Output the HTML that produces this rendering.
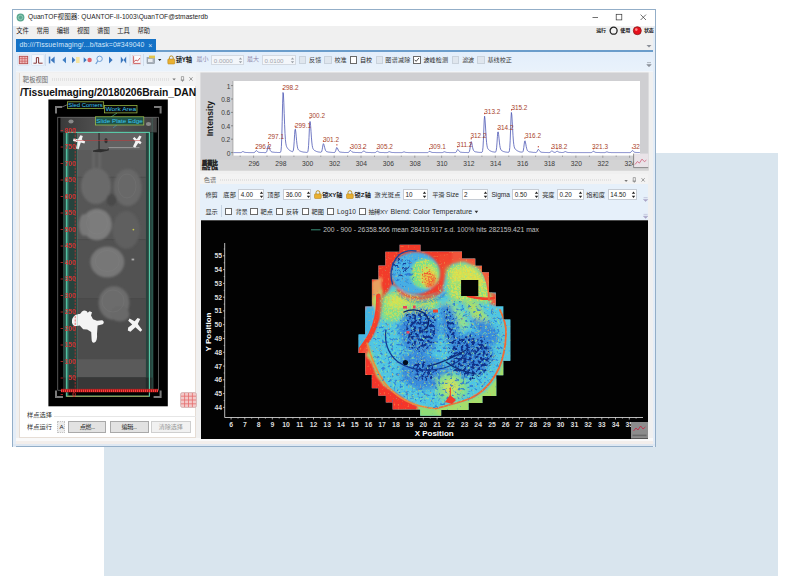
<!DOCTYPE html>
<html lang="zh"><head><meta charset="utf-8"><title>QuanTOF视图器</title>
<style>html,body{margin:0;padding:0;background:#fff;}body{width:788px;height:585px;position:relative;overflow:hidden;font-family:"Liberation Sans","Noto Sans CJK SC",sans-serif;}</style>
</head><body>
<div style="position:absolute;left:104px;top:153px;width:674px;height:423px;background:#d9e5ee;"></div>
<div style="position:absolute;left:12px;top:9px;width:644px;height:438px;background:#f0f0f0;border:1px solid #93aec8;box-sizing:border-box"></div>
<div style="position:absolute;left:13px;top:25.5px;width:3px;height:421px;background:#e4edf7;"></div>
<div style="position:absolute;left:652.6px;top:25.5px;width:2.6px;height:421px;background:#e4edf7;"></div>
<div style="position:absolute;left:13px;top:443.6px;width:642px;height:2.8px;background:#dfe8f2;"></div>
<div style="position:absolute;left:16px;top:437.6px;width:636.5px;height:3.4px;background:#f9f9f9;"></div>
<div style="position:absolute;left:16px;top:441px;width:636.5px;height:2.6px;background:#f3eeeb;"></div>
<div style="position:absolute;left:13px;top:10px;width:642px;height:15.5px;background:#ffffff;"></div>
<svg style="position:absolute;left:16px;top:13px" width="9" height="9" viewBox="0 0 9 9"><circle cx="4.5" cy="4.5" r="3.9" fill="#5aa890"/><circle cx="4.5" cy="4.5" r="2.2" fill="none" stroke="#9fd2c0" stroke-width="0.8"/></svg>
<span style="position:absolute;left:28px;top:13.41px;font-size:6.6px;line-height:8.58px;color:#222;white-space:nowrap;letter-spacing:0.047px;">QuanTOF视图器: QUANTOF-II-1003\QuanTOF@stmasterdb</span>
<svg style="position:absolute;left:585px;top:10px" width="70" height="15" viewBox="0 0 70 15"><g stroke="#333" stroke-width="0.7" fill="none"><path d="M7.5 7.5h5.5"/><rect x="31.2" y="4.3" width="5.6" height="5.6"/><path d="M55.6 4.6l5.4 5.4M61 4.6l-5.4 5.4"/></g></svg>
<span style="position:absolute;left:16.3px;top:26.71px;font-size:6.3px;line-height:8.19px;color:#1a1a1a;white-space:nowrap;letter-spacing:0.003px;">文件</span>
<span style="position:absolute;left:36.5px;top:26.71px;font-size:6.3px;line-height:8.19px;color:#1a1a1a;white-space:nowrap;letter-spacing:0.003px;">常用</span>
<span style="position:absolute;left:56.7px;top:26.71px;font-size:6.3px;line-height:8.19px;color:#1a1a1a;white-space:nowrap;letter-spacing:0.003px;">编辑</span>
<span style="position:absolute;left:76.89999999999999px;top:26.71px;font-size:6.3px;line-height:8.19px;color:#1a1a1a;white-space:nowrap;letter-spacing:0.003px;">视图</span>
<span style="position:absolute;left:97.1px;top:26.71px;font-size:6.3px;line-height:8.19px;color:#1a1a1a;white-space:nowrap;letter-spacing:0.003px;">谱图</span>
<span style="position:absolute;left:117.3px;top:26.71px;font-size:6.3px;line-height:8.19px;color:#1a1a1a;white-space:nowrap;letter-spacing:0.003px;">工具</span>
<span style="position:absolute;left:137.5px;top:26.71px;font-size:6.3px;line-height:8.19px;color:#1a1a1a;white-space:nowrap;letter-spacing:0.003px;">帮助</span>
<span style="position:absolute;left:596.3px;top:27.35px;font-size:5px;line-height:6.5px;color:#111;white-space:nowrap;font-weight:bold;letter-spacing:-0.408px;">运行</span>
<span style="position:absolute;left:620.3px;top:27.35px;font-size:5px;line-height:6.5px;color:#111;white-space:nowrap;font-weight:bold;letter-spacing:-0.158px;">使用</span>
<span style="position:absolute;left:644px;top:27.35px;font-size:5px;line-height:6.5px;color:#111;white-space:nowrap;font-weight:bold;letter-spacing:-0.208px;">状态</span>
<svg style="position:absolute;left:608px;top:25px" width="36" height="12" viewBox="0 0 36 12"><circle cx="5.6" cy="5.7" r="3.5" fill="#f4f4f4" stroke="#222" stroke-width="1.3"/><circle cx="29.3" cy="5.7" r="4" fill="#e8101c" stroke="#8a1a1a" stroke-width="0.8"/><circle cx="28.3" cy="4.6" r="1.3" fill="#ff8a8a"/></svg>
<div style="position:absolute;left:16px;top:39px;width:140px;height:12.6px;background:#1572c6;"></div>
<span style="position:absolute;left:19.5px;top:40.72px;font-size:6.9px;line-height:8.97px;color:#d6e8fa;white-space:nowrap;letter-spacing:0.116px;">db:///TissueImaging/...b/task=0#349040</span>
<span style="position:absolute;left:148.3px;top:40.65px;font-size:7px;line-height:9.1px;color:#d6e8fa;white-space:nowrap;">×</span>
<div style="position:absolute;left:156px;top:50px;width:496.5px;height:1.6px;background:#6b9dcb;"></div>
<svg style="position:absolute;left:645px;top:43px" width="8" height="6" viewBox="0 0 8 6"><path d="M1.5 2l2.5 2.4L6.5 2z" fill="#8a8f98"/></svg>
<div style="position:absolute;left:16px;top:51.6px;width:636.5px;height:19px;background:linear-gradient(#e3eefb,#e9f2fb);"></div>
<div style="position:absolute;left:16px;top:70.6px;width:636.5px;height:1.8px;background:#f1f5fa;"></div>
<svg style="position:absolute;left:16px;top:52px" width="180" height="18" viewBox="16 52 180 18">
<rect x="17.6" y="54.6" width="11.6" height="10.8" rx="1" fill="#f4f8fd" stroke="#c9dcef" stroke-width="0.6"/>
<rect x="19.3" y="56.3" width="8.4" height="7.4" fill="#eebcbc" stroke="#b04a4a" stroke-width="0.9"/>
<path d="M19.3 58.6h8.4M19.3 61.2h8.4M22.1 56.3v7.4M24.9 56.3v7.4" stroke="#c85050" stroke-width="0.6"/>
<rect x="31.6" y="54.6" width="12.6" height="10.8" rx="1" fill="#f4f8fd" stroke="#c9dcef" stroke-width="0.6"/>
<path d="M33.4 63.2h3v-5.6h2.2v5.6h4" fill="none" stroke="#7a2020" stroke-width="0.9"/>
<path d="M45.4 54v12" stroke="#c5d3e2" stroke-width="0.7"/>
<g fill="#3a76bd">
<rect x="48.8" y="56.6" width="1.5" height="6.8"/><path d="M54.6 56.6v6.8l-4-3.4z"/>
<path d="M66 56.8v6.4l-3.6-3.2z" fill="#3f7fc4"/>
<path d="M72 56.8v6.4l3.4-3.2z"/>
<path d="M83.7 57.2v5.6l3-2.8z"/>
<path d="M109 56.6v6.8l3.6-3.4z"/>
<path d="M120.8 56.6l2.7 3.4-2.7 3.4zM126.2 56.6l-2.7 3.4 2.7 3.4z"/>
</g>
<rect x="76" y="57" width="3.6" height="6" fill="#f5e4a0"/>
<circle cx="89.6" cy="60" r="2.2" fill="#e2606a"/>
<circle cx="99.6" cy="58.8" r="2.7" fill="#e8f1fb" stroke="#6f9fd6" stroke-width="1"/><path d="M97.8 61l-2 3" stroke="#6f9fd6" stroke-width="1.3"/>
<path d="M130 54v12M143.5 54v12" stroke="#c5d3e2" stroke-width="0.7"/>
<rect x="132.6" y="55.6" width="8.2" height="8.6" fill="#fbfbfd" stroke="#d9c4c8" stroke-width="0.5"/>
<path d="M133.6 56.2v7.2h6.8M134 61.6l2-1.6 1.6 1 2.4-3" fill="none" stroke="#c23a3a" stroke-width="0.8"/>
<rect x="147" y="57.6" width="7.6" height="6" fill="#a9b1bb" stroke="#7f8790" stroke-width="0.5"/>
<rect x="149" y="55.6" width="6" height="2.6" fill="#e3c54a"/>
<rect x="148" y="59" width="4.6" height="3" fill="#e9edf2"/>
<path d="M158 59l1.7 2 1.7-2z" fill="#222"/>
<path d="M169.4 59.2v-1.4a1.9 1.9 0 0 1 3.8 0v1.4" fill="none" stroke="#b8860b" stroke-width="0.9"/>
<rect x="167.8" y="59" width="7" height="5" rx="0.8" fill="#e9b030" stroke="#b07d10" stroke-width="0.5"/>
</svg>
<span style="position:absolute;left:175.7px;top:55.91px;font-size:6.3px;line-height:8.19px;color:#1e1e1e;white-space:nowrap;font-weight:bold;letter-spacing:-0.266px;">锁Y轴</span>
<span style="position:absolute;left:196.6px;top:56.1px;font-size:6.0px;line-height:7.8px;color:#8d86a8;white-space:nowrap;letter-spacing:-0.208px;">最小</span>
<div style="position:absolute;left:211.4px;top:54.8px;width:32.3px;height:10.6px;background:#f3f6fa;border:0.6px solid #d3d9e1;box-sizing:border-box;"></div>
<span style="position:absolute;left:213.8px;top:56.97px;font-size:6.2px;line-height:8.06px;color:#a3a7ae;white-space:nowrap;">0.0000</span>
<svg style="position:absolute;left:238.1px;top:55.8px" width="5" height="8.6" viewBox="0 0 5 10" preserveAspectRatio="none"><path d="M0.8 4L2.5 1.6 4.2 4zM0.8 6L2.5 8.4 4.2 6z" fill="#9aa0a8"/></svg>
<span style="position:absolute;left:247px;top:56.1px;font-size:6.0px;line-height:7.8px;color:#8d86a8;white-space:nowrap;letter-spacing:-0.058px;">最大</span>
<div style="position:absolute;left:262.2px;top:54.8px;width:33.5px;height:10.6px;background:#f3f6fa;border:0.6px solid #d3d9e1;box-sizing:border-box;"></div>
<span style="position:absolute;left:264.59999999999997px;top:56.97px;font-size:6.2px;line-height:8.06px;color:#a3a7ae;white-space:nowrap;">0.0100</span>
<svg style="position:absolute;left:290.09999999999997px;top:55.8px" width="5" height="8.6" viewBox="0 0 5 10" preserveAspectRatio="none"><path d="M0.8 4L2.5 1.6 4.2 4zM0.8 6L2.5 8.4 4.2 6z" fill="#9aa0a8"/></svg>
<div style="position:absolute;left:299px;top:56.3px;width:7.4px;height:7.4px;background:#dfe6ee;border:0.6px solid #c9d2dc;box-sizing:border-box;"></div>
<span style="position:absolute;left:309px;top:56.03px;font-size:6.1px;line-height:7.93px;color:#3a3a3a;white-space:nowrap;letter-spacing:0.056px;">反馈</span>
<div style="position:absolute;left:324.4px;top:56.3px;width:7.4px;height:7.4px;background:#dfe6ee;border:0.6px solid #c9d2dc;box-sizing:border-box;"></div>
<span style="position:absolute;left:334.5px;top:56.03px;font-size:6.1px;line-height:7.93px;color:#3a3a3a;white-space:nowrap;letter-spacing:0.006px;">校准</span>
<div style="position:absolute;left:349.7px;top:56.3px;width:7.4px;height:7.4px;background:#ffffff;border:0.6px solid #6a6a6a;box-sizing:border-box;"></div>
<span style="position:absolute;left:359.9px;top:56.03px;font-size:6.1px;line-height:7.93px;color:#222;white-space:nowrap;letter-spacing:-0.044px;">自校</span>
<div style="position:absolute;left:375.6px;top:56.3px;width:7.4px;height:7.4px;background:#dfe6ee;border:0.6px solid #c9d2dc;box-sizing:border-box;"></div>
<span style="position:absolute;left:385.3px;top:56.03px;font-size:6.1px;line-height:7.93px;color:#3a3a3a;white-space:nowrap;letter-spacing:0.256px;">图谱减除</span>
<div style="position:absolute;left:413.2px;top:56.3px;width:7.4px;height:7.4px;background:#ffffff;border:0.6px solid #6a6a6a;box-sizing:border-box;"></div>
<svg style="position:absolute;left:413.2px;top:56.3px" width="7.4" height="7.4" viewBox="0 0 8 8"><path d="M1.8 4.1l1.6 1.7 3-3.6" fill="none" stroke="#222" stroke-width="0.9"/></svg>
<span style="position:absolute;left:423.4px;top:56.03px;font-size:6.1px;line-height:7.93px;color:#222;white-space:nowrap;letter-spacing:0.106px;">波峰检测</span>
<div style="position:absolute;left:452px;top:56.3px;width:7.4px;height:7.4px;background:#dfe6ee;border:0.6px solid #c9d2dc;box-sizing:border-box;"></div>
<span style="position:absolute;left:462.2px;top:56.03px;font-size:6.1px;line-height:7.93px;color:#3a3a3a;white-space:nowrap;letter-spacing:-0.194px;">滤波</span>
<div style="position:absolute;left:477.4px;top:56.3px;width:7.4px;height:7.4px;background:#dfe6ee;border:0.6px solid #c9d2dc;box-sizing:border-box;"></div>
<span style="position:absolute;left:487.6px;top:56.03px;font-size:6.1px;line-height:7.93px;color:#3a3a3a;white-space:nowrap;letter-spacing:-0.069px;">基线校正</span>
<svg style="position:absolute;left:645px;top:61px" width="8" height="8" viewBox="0 0 8 8"><path d="M2 1.6h4M1.8 3.6l2.2 2.2 2.2-2.2z" stroke="#8a8f98" stroke-width="0.6" fill="#8a8f98"/></svg>
<div style="position:absolute;left:19px;top:72.5px;width:177.4px;height:365px;background:#ffffff;border:0.7px solid #e6ddd5;box-sizing:border-box;"></div>
<div style="position:absolute;left:19.7px;top:73.2px;width:176px;height:12.6px;background:#f3f3f3;"></div>
<span style="position:absolute;left:22.8px;top:75.5px;font-size:6.3px;line-height:8.19px;color:#6a6a6a;white-space:nowrap;letter-spacing:0.053px;">靶板视图</span>
<div style="position:absolute;left:52px;top:78.4px;width:118px;height:2.4px;background:repeating-linear-gradient(90deg,#e2e2e2 0 1px,#f3f3f3 1px 2px);"></div>
<svg style="position:absolute;left:170px;top:75px" width="26" height="9" viewBox="170 75 26 9"><path d="M172.4 78.6h3.4l-1.7 1.9z" fill="#777"/><path d="M181.4 76.6h2.2v3.6h-2.2zM182.5 80.2v1.6M180.8 80.2h3.4" fill="none" stroke="#777" stroke-width="0.6"/><path d="M189.4 77.2l3.2 3.4M192.6 77.2l-3.2 3.4" stroke="#777" stroke-width="0.7"/></svg>
<span style="position:absolute;left:19.9px;top:85.5px;font-size:10.3px;line-height:13.39px;color:#111;white-space:nowrap;font-weight:bold;letter-spacing:-0.050px;">/TissueImaging/20180206Brain_DAN</span>
<svg style="position:absolute;left:48px;top:99px" width="121" height="308" viewBox="48 99 121 308" font-family="'Liberation Sans',sans-serif"><defs><filter id="b1" x="-20%" y="-20%" width="140%" height="140%"><feGaussianBlur stdDeviation="0.9"/></filter><filter id="b2" x="-20%" y="-20%" width="140%" height="140%"><feGaussianBlur stdDeviation="1.8"/></filter><filter id="b05"><feGaussianBlur stdDeviation="0.45"/></filter><linearGradient id="sg" x1="0" y1="0" x2="0" y2="1"><stop offset="0" stop-color="#5e5e5e"/><stop offset="0.35" stop-color="#595959"/><stop offset="0.7" stop-color="#505050"/><stop offset="1" stop-color="#464646"/></linearGradient><linearGradient id="tg" x1="0" y1="0" x2="1" y2="0"><stop offset="0" stop-color="#3a3a3a"/><stop offset="0.5" stop-color="#565656"/><stop offset="1" stop-color="#404040"/></linearGradient></defs><rect x="48.4" y="99.5" width="119.4" height="306.8" fill="#000"/><rect x="60.400" y="117.400" width="96.400" height="15" fill="url(#tg)"/><rect x="63" y="132.400" width="90.400" height="256.400" fill="#27433d"/><rect x="77.200" y="132.400" width="68.600" height="256.400" fill="url(#sg)"/><rect x="140.400" y="150" width="5.400" height="238" fill="#474747" opacity="0.700"/><g filter="url(#b05)"><ellipse cx="71" cy="121.500" rx="2.600" ry="2" fill="#8a8a8a"/><ellipse cx="148.500" cy="124" rx="2.600" ry="2" fill="#8a8a8a"/></g><rect x="77.200" y="132.400" width="68.600" height="17.600" fill="#626262"/><rect x="77.200" y="150" width="68.600" height="27.200" fill="#5b5b5b"/><rect x="77.200" y="177.200" width="68.600" height="62.400" fill="#565656"/><rect x="77.200" y="239.600" width="68.600" height="59" fill="#525252"/><rect x="77.200" y="298.600" width="68.600" height="60.600" fill="#4c4c4c"/><rect x="77.200" y="359.200" width="68.600" height="18.400" fill="#5a5a5a"/><rect x="63" y="377.600" width="90.400" height="11.200" fill="#232c2a"/><rect x="77.200" y="377.600" width="68.600" height="11.200" fill="#383838"/><path d="M77.200 177.200h68.600M77.200 239.600h68.600M77.200 298.600h68.600" stroke="#474747" stroke-width="0.500"/><g filter="url(#b1)"><ellipse cx="96" cy="186" rx="15" ry="18" fill="#6a6a6a"/><ellipse cx="127.600" cy="187.500" rx="14" ry="18.600" fill="#686868"/><path d="M92.600 150h1.800v18h-1.800zM98.800 150h1.800v18h-1.800z" fill="#6c6c6c"/><ellipse cx="111.500" cy="200" rx="5" ry="6" fill="#484848"/><ellipse cx="97" cy="224.500" rx="14.800" ry="15.800" fill="#7c7c7c"/><ellipse cx="84" cy="225" rx="5" ry="11" fill="#787878"/><ellipse cx="126.200" cy="230" rx="13.600" ry="19" fill="#5e5e5e"/><ellipse cx="107.300" cy="262" rx="17" ry="15.600" fill="#777"/><ellipse cx="114" cy="303" rx="15.400" ry="16.800" fill="#6c6c6c"/><ellipse cx="120" cy="314" rx="9.500" ry="7.500" fill="#696969"/></g><g filter="url(#b05)" fill="none" stroke="#8c8c8c" stroke-width="0.600" opacity="0.300"><ellipse cx="97" cy="223" rx="10.500" ry="11"/><ellipse cx="107.300" cy="261" rx="12" ry="10.500"/><ellipse cx="113" cy="301" rx="11" ry="11"/><ellipse cx="127" cy="186" rx="9" ry="12"/></g><g filter="url(#b05)"><path d="M98.400 133h1.300v16h-1.300z" fill="#303030"/><path d="M93 150.600l6-1.600 8 .6 2-1.600-.4 2.600-8 1.600-7.600-.4z" fill="#2e2e2e"/><ellipse cx="106" cy="140.600" rx="1.700" ry="2.600" fill="#333"/><path d="M108.500 147.600h31" stroke="#b0b0b0" stroke-width="0.700"/></g><g filter="url(#b05)" fill="#f4f4f4"><path d="M80.400 135.200l2.400.800-1 3.600 3.400 1.800-.8 2.200-3.600-1-2.200 6.600-2.600-.600 1.400-6.400-4.400-1.200.6-2.400 4.400.600z"/><path d="M139.400 135.400l2.200 1-2 4.200 2 2-1.400 1.600-2-1.200-3 4.800-2.200-1.200 2.400-5-2.600-3 1.600-1.600 2.400 2.200z"/><path d="M72 320c1-4 4-6 8-6l2-2.600c2-1.400 5-1 5.600 1.400l2-1.600 2.400 1-1 3.400 2 3.600 4 1.600 5-.6c2 .4 2.400 3 .6 4l-5 1.400-.6 8.400c.4 4.600-.4 7.400-2.400 8.600-2 .6-3-1-3-3.600l-.4-7-4-2.400-4-.4-3.400-3.600-4.600.6c-2.400-.6-3.600-3-3.200-5.800z"/><path d="M137.600 318l2.600 1-2.400 5 4.400 6-1.800 1.800-5-4.600-5 4.600-2.600-1.200.4-3 4-3.200-4-3.600 1.400-2.200 5 2.600z"/></g><circle cx="133.400" cy="229.600" r="0.900" fill="#c8c84a"/><rect x="131.600" y="258.600" width="2.600" height="1.800" fill="#aaa" filter="url(#b05)"/><rect x="57.8" y="117.2" width="100.6" height="273" fill="none" stroke="#8d8d8d" stroke-width="0.6"/><path d="M76 140.500h64" stroke="#c83434" stroke-width="0.500"/><rect x="66.400" y="132.400" width="83" height="263.800" fill="none" stroke="#5acdaa" stroke-width="1.100"/><path d="M67.600 133v263" stroke="#3f9f86" stroke-width="1.600" opacity="0.700"/><path d="M77.300 133v256M152.200 118v272" stroke="#3f9f86" stroke-width="0.500" opacity="0.600"/><path d="M66.7 396.300h82" stroke="#b9a04a" stroke-width="0.8"/><g fill="none" stroke="#7a7a7a" stroke-width="2"><path d="M56 113.600v-6.600h6"/><path d="M154 107h6.600v6.600"/><path d="M56 390.400v6.600h7"/><path d="M153.600 397h7v-6.600"/></g><path d="M75.200 128v264" stroke="#e03030" stroke-width="0.7" stroke-dasharray="2.2 1.1"/><path d="M60.600 130.5h2.400" stroke="#e03030" stroke-width="0.7"/><text x="76" y="132.9" font-size="6.800" font-weight="bold" fill="#e23434" opacity="0.900" text-anchor="end">800</text><path d="M60.600 147.0h2.400" stroke="#e03030" stroke-width="0.7"/><text x="76" y="149.4" font-size="6.800" font-weight="bold" fill="#e23434" opacity="0.900" text-anchor="end">750</text><path d="M60.600 163.5h2.400" stroke="#e03030" stroke-width="0.7"/><text x="76" y="165.9" font-size="6.800" font-weight="bold" fill="#e23434" opacity="0.900" text-anchor="end">700</text><path d="M60.600 180.0h2.400" stroke="#e03030" stroke-width="0.7"/><text x="76" y="182.4" font-size="6.800" font-weight="bold" fill="#e23434" opacity="0.900" text-anchor="end">650</text><path d="M60.600 196.5h2.400" stroke="#e03030" stroke-width="0.7"/><text x="76" y="198.9" font-size="6.800" font-weight="bold" fill="#e23434" opacity="0.900" text-anchor="end">600</text><path d="M60.600 213.0h2.400" stroke="#e03030" stroke-width="0.7"/><text x="76" y="215.4" font-size="6.800" font-weight="bold" fill="#e23434" opacity="0.900" text-anchor="end">550</text><path d="M60.600 229.5h2.400" stroke="#e03030" stroke-width="0.7"/><text x="76" y="231.9" font-size="6.800" font-weight="bold" fill="#e23434" opacity="0.900" text-anchor="end">500</text><path d="M60.600 246.0h2.400" stroke="#e03030" stroke-width="0.7"/><text x="76" y="248.4" font-size="6.800" font-weight="bold" fill="#e23434" opacity="0.900" text-anchor="end">450</text><path d="M60.600 262.5h2.400" stroke="#e03030" stroke-width="0.7"/><text x="76" y="264.9" font-size="6.800" font-weight="bold" fill="#e23434" opacity="0.900" text-anchor="end">400</text><path d="M60.600 279.0h2.400" stroke="#e03030" stroke-width="0.7"/><text x="76" y="281.4" font-size="6.800" font-weight="bold" fill="#e23434" opacity="0.900" text-anchor="end">350</text><path d="M60.600 295.5h2.400" stroke="#e03030" stroke-width="0.7"/><text x="76" y="297.9" font-size="6.800" font-weight="bold" fill="#e23434" opacity="0.900" text-anchor="end">300</text><path d="M60.600 312.0h2.400" stroke="#e03030" stroke-width="0.7"/><text x="76" y="314.4" font-size="6.800" font-weight="bold" fill="#e23434" opacity="0.900" text-anchor="end">250</text><path d="M60.600 328.5h2.400" stroke="#e03030" stroke-width="0.7"/><text x="76" y="330.9" font-size="6.800" font-weight="bold" fill="#e23434" opacity="0.900" text-anchor="end">200</text><path d="M60.600 345.0h2.400" stroke="#e03030" stroke-width="0.7"/><text x="76" y="347.4" font-size="6.800" font-weight="bold" fill="#e23434" opacity="0.900" text-anchor="end">150</text><path d="M60.600 361.5h2.400" stroke="#e03030" stroke-width="0.7"/><text x="76" y="363.9" font-size="6.800" font-weight="bold" fill="#e23434" opacity="0.900" text-anchor="end">100</text><path d="M60.600 378.0h2.400" stroke="#e03030" stroke-width="0.7"/><text x="76" y="380.4" font-size="6.800" font-weight="bold" fill="#e23434" opacity="0.900" text-anchor="end">50</text><path d="M60.600 394.5h2.400" stroke="#e03030" stroke-width="0.7"/><text x="76" y="396.9" font-size="6.800" font-weight="bold" fill="#e23434" opacity="0.900" text-anchor="end">0</text><rect x="61" y="389.200" width="97" height="3.200" fill="#7a1010"/><path d="M61 390.800h97" stroke="#ff3b3b" stroke-width="2.600" stroke-dasharray="1.300 0.700"/><path d="M61 389.300h97" stroke="#e03030" stroke-width="0.600"/><path d="M62 107l5.600-2.400" stroke="#9a9a9a" stroke-width="0.700"/><path d="M117 113l-6 4" stroke="#58c9a6" stroke-width="0.600"/><path d="M118 124l-5 4" stroke="#3aa0c0" stroke-width="0.600"/><rect x="67.4" y="101.8" width="36.3" height="6.8" fill="#0a0a0a" stroke="#a8c84a" stroke-width="0.700"/><text x="68.30000000000001" y="106.89999999999999" font-size="6" fill="#39c5f0" textLength="34.4" lengthAdjust="spacingAndGlyphs">Sled Corners</text><rect x="104.6" y="105.5" width="32.4" height="7.4" fill="#0a0a0a" stroke="#a8c84a" stroke-width="0.700"/><text x="105.5" y="111.2" font-size="6" fill="#39c5f0" textLength="30.6" lengthAdjust="spacingAndGlyphs">Work Area</text><rect x="95.4" y="116.8" width="48.4" height="8.2" fill="#1f5348" stroke="#a8c84a" stroke-width="0.700"/><text x="96.30000000000001" y="123.3" font-size="6" fill="#39c5f0" textLength="46.4" lengthAdjust="spacingAndGlyphs">Slide Plate Edge</text></svg>
<svg style="position:absolute;left:180px;top:391.5px" width="17" height="16" viewBox="0 0 17 16"><rect x="0.6" y="0.6" width="15.8" height="14.8" rx="1.6" fill="#f3c9c9" stroke="#c9a3a3" stroke-width="0.7"/><path d="M1 4.2h15M1 8h15M1 11.8h15M4.6 1v14M8.5 1v14M12.4 1v14" stroke="#e46c6c" stroke-width="0.8"/></svg>
<span style="position:absolute;left:27px;top:411.47px;font-size:6.2px;line-height:8.06px;color:#333;white-space:nowrap;letter-spacing:0.062px;">样点选择</span>
<div style="position:absolute;left:53.5px;top:415.6px;width:142px;height:0.5px;background:#e6e6e6;"></div>
<span style="position:absolute;left:27px;top:422.97px;font-size:6.2px;line-height:8.06px;color:#333;white-space:nowrap;letter-spacing:0.062px;">样点运行</span>
<div style="position:absolute;left:57.4px;top:420.6px;width:7.6px;height:12.6px;background:#ececec;border:0.6px dotted #c4c4c4;box-sizing:border-box;"></div>
<span style="position:absolute;left:59.6px;top:422.97px;font-size:6.2px;line-height:8.06px;color:#222;white-space:nowrap;">A</span>
<div style="position:absolute;left:68px;top:421.3px;width:38.4px;height:11.4px;background:#e2e2e2;border:0.7px solid #a9a9a9;box-sizing:border-box;"></div>
<span style="position:absolute;left:79.7px;top:423.04px;font-size:6.1px;line-height:7.93px;color:#222;white-space:nowrap;letter-spacing:-0.456px;">点燃...</span>
<div style="position:absolute;left:109.5px;top:421.3px;width:39px;height:11.4px;background:#e2e2e2;border:0.7px solid #a9a9a9;box-sizing:border-box;"></div>
<span style="position:absolute;left:121.5px;top:423.04px;font-size:6.1px;line-height:7.93px;color:#222;white-space:nowrap;letter-spacing:-0.456px;">编辑...</span>
<div style="position:absolute;left:151px;top:421.3px;width:39.7px;height:11.4px;background:#f1f1f1;border:0.7px solid #cfcfcf;box-sizing:border-box;"></div>
<span style="position:absolute;left:158.85px;top:423.04px;font-size:6.1px;line-height:7.93px;color:#9a9a9a;white-space:nowrap;letter-spacing:-0.094px;">清除选择</span>
<svg style="position:absolute;left:200px;top:72px" width="449" height="99" viewBox="200 72 449 99" font-family="'Liberation Sans','Noto Sans CJK SC',sans-serif"><rect x="200.4" y="72.5" width="448.2" height="98" fill="#cfcfd2"/><rect x="200.4" y="159.700" width="448.2" height="10.800" fill="#d3d3d4"/><rect x="233" y="81" width="407" height="74.600" fill="#ffffff"/><clipPath id="pc"><rect x="233" y="81" width="407" height="74.600"/></clipPath><path d="M231 152.6h2" stroke="#555" stroke-width="0.6"/><text x="230.300" y="155.6" font-size="6.600" fill="#3a3a3a" text-anchor="end">0</text><path d="M231 139.2h2" stroke="#555" stroke-width="0.6"/><text x="230.300" y="142.2" font-size="6.600" fill="#3a3a3a" text-anchor="end">0.2</text><path d="M231 125.8h2" stroke="#555" stroke-width="0.6"/><text x="230.300" y="128.8" font-size="6.600" fill="#3a3a3a" text-anchor="end">0.4</text><path d="M231 112.4h2" stroke="#555" stroke-width="0.6"/><text x="230.300" y="115.4" font-size="6.600" fill="#3a3a3a" text-anchor="end">0.6</text><path d="M231 99.0h2" stroke="#555" stroke-width="0.6"/><text x="230.300" y="102.0" font-size="6.600" fill="#3a3a3a" text-anchor="end">0.8</text><path d="M231 85.6h2" stroke="#555" stroke-width="0.6"/><text x="230.300" y="88.6" font-size="6.600" fill="#3a3a3a" text-anchor="end">1</text><path d="M233 81v74.600" stroke="#777" stroke-width="0.5"/><path d="M240.2 155.600v1.3" stroke="#666" stroke-width="0.5"/><path d="M253.6 155.600v2.2" stroke="#666" stroke-width="0.5"/><text x="254.0" y="165.800" font-size="6.700" fill="#3a3a3a" text-anchor="middle">296</text><path d="M267.0 155.600v1.3" stroke="#666" stroke-width="0.5"/><path d="M280.5 155.600v2.2" stroke="#666" stroke-width="0.5"/><text x="280.9" y="165.800" font-size="6.700" fill="#3a3a3a" text-anchor="middle">298</text><path d="M293.9 155.600v1.3" stroke="#666" stroke-width="0.5"/><path d="M307.3 155.600v2.2" stroke="#666" stroke-width="0.5"/><text x="307.7" y="165.800" font-size="6.700" fill="#3a3a3a" text-anchor="middle">300</text><path d="M320.8 155.600v1.3" stroke="#666" stroke-width="0.5"/><path d="M334.2 155.600v2.2" stroke="#666" stroke-width="0.5"/><text x="334.6" y="165.800" font-size="6.700" fill="#3a3a3a" text-anchor="middle">302</text><path d="M347.6 155.600v1.3" stroke="#666" stroke-width="0.5"/><path d="M361.0 155.600v2.2" stroke="#666" stroke-width="0.5"/><text x="361.4" y="165.800" font-size="6.700" fill="#3a3a3a" text-anchor="middle">304</text><path d="M374.5 155.600v1.3" stroke="#666" stroke-width="0.5"/><path d="M387.9 155.600v2.2" stroke="#666" stroke-width="0.5"/><text x="388.3" y="165.800" font-size="6.700" fill="#3a3a3a" text-anchor="middle">306</text><path d="M401.3 155.600v1.3" stroke="#666" stroke-width="0.5"/><path d="M414.8 155.600v2.2" stroke="#666" stroke-width="0.5"/><text x="415.2" y="165.800" font-size="6.700" fill="#3a3a3a" text-anchor="middle">308</text><path d="M428.2 155.600v1.3" stroke="#666" stroke-width="0.5"/><path d="M441.6 155.600v2.2" stroke="#666" stroke-width="0.5"/><text x="442.0" y="165.800" font-size="6.700" fill="#3a3a3a" text-anchor="middle">310</text><path d="M455.0 155.600v1.3" stroke="#666" stroke-width="0.5"/><path d="M468.5 155.600v2.2" stroke="#666" stroke-width="0.5"/><text x="468.9" y="165.800" font-size="6.700" fill="#3a3a3a" text-anchor="middle">312</text><path d="M481.9 155.600v1.3" stroke="#666" stroke-width="0.5"/><path d="M495.3 155.600v2.2" stroke="#666" stroke-width="0.5"/><text x="495.7" y="165.800" font-size="6.700" fill="#3a3a3a" text-anchor="middle">314</text><path d="M508.8 155.600v1.3" stroke="#666" stroke-width="0.5"/><path d="M522.2 155.600v2.2" stroke="#666" stroke-width="0.5"/><text x="522.6" y="165.800" font-size="6.700" fill="#3a3a3a" text-anchor="middle">316</text><path d="M535.6 155.600v1.3" stroke="#666" stroke-width="0.5"/><path d="M549.1 155.600v2.2" stroke="#666" stroke-width="0.5"/><text x="549.5" y="165.800" font-size="6.700" fill="#3a3a3a" text-anchor="middle">318</text><path d="M562.5 155.600v1.3" stroke="#666" stroke-width="0.5"/><path d="M575.9 155.600v2.2" stroke="#666" stroke-width="0.5"/><text x="576.3" y="165.800" font-size="6.700" fill="#3a3a3a" text-anchor="middle">320</text><path d="M589.4 155.600v1.3" stroke="#666" stroke-width="0.5"/><path d="M602.8 155.600v2.2" stroke="#666" stroke-width="0.5"/><text x="603.2" y="165.800" font-size="6.700" fill="#3a3a3a" text-anchor="middle">322</text><path d="M616.2 155.600v1.3" stroke="#666" stroke-width="0.5"/><path d="M629.6 155.600v2.2" stroke="#666" stroke-width="0.5"/><text x="630.0" y="165.800" font-size="6.700" fill="#3a3a3a" text-anchor="middle">324</text><g clip-path="url(#pc)"><path d="M233.4 152.6 L233.8 152.6 L234.2 152.6 L234.6 152.6 L235.0 152.6 L235.4 152.6 L235.8 152.6 L236.2 152.6 L236.6 152.6 L237.0 152.6 L237.4 152.6 L237.8 152.6 L238.2 152.6 L238.6 152.6 L239.0 152.6 L239.4 152.6 L239.8 152.6 L240.2 152.6 L240.6 152.6 L241.0 152.5 L241.4 152.4 L241.8 152.2 L242.2 151.9 L242.6 151.6 L243.0 151.6 L243.4 151.7 L243.8 151.9 L244.2 152.1 L244.6 152.3 L245.0 152.4 L245.4 152.4 L245.8 152.5 L246.2 152.5 L246.6 152.5 L247.0 152.5 L247.4 152.5 L247.8 152.5 L248.2 152.5 L248.6 152.6 L249.0 152.6 L249.4 152.6 L249.8 152.6 L250.2 152.6 L250.6 152.6 L251.0 152.6 L251.4 152.6 L251.8 152.6 L252.2 152.6 L252.6 152.6 L253.0 152.6 L253.4 152.6 L253.8 152.6 L254.2 152.5 L254.6 152.4 L255.0 152.0 L255.4 151.5 L255.8 150.9 L256.2 150.6 L256.6 150.7 L257.0 151.0 L257.4 151.4 L257.8 151.7 L258.2 152.0 L258.6 152.2 L259.0 152.3 L259.4 152.4 L259.8 152.4 L260.2 152.4 L260.6 152.5 L261.0 152.5 L261.4 152.5 L261.8 152.5 L262.2 152.5 L262.6 152.5 L263.0 152.5 L263.4 152.5 L263.8 152.5 L264.2 152.6 L264.6 152.6 L265.0 152.6 L265.4 152.6 L265.8 152.5 L266.2 152.4 L266.6 151.9 L267.0 150.8 L267.4 149.1 L267.8 147.0 L268.2 145.5 L268.6 145.6 L269.0 146.6 L269.4 147.9 L269.8 149.2 L270.2 150.3 L270.6 151.0 L271.0 151.5 L271.4 151.7 L271.8 151.9 L272.2 152.0 L272.6 152.1 L273.0 152.1 L273.4 152.2 L273.8 152.2 L274.2 152.3 L274.6 152.3 L275.0 152.3 L275.4 152.4 L275.8 152.4 L276.2 152.4 L276.6 152.4 L277.0 152.5 L277.4 152.5 L277.8 152.5 L278.2 152.5 L278.6 152.5 L279.0 152.5 L279.4 152.5 L279.8 152.5 L280.2 152.5 L280.6 152.1 L281.0 150.7 L281.4 146.5 L281.8 137.0 L282.2 121.5 L282.6 103.8 L283.0 92.5 L283.4 94.0 L283.8 102.3 L284.2 113.4 L284.6 124.5 L285.0 133.5 L285.4 139.5 L285.8 143.2 L286.2 145.3 L286.6 146.6 L287.0 147.4 L287.4 148.1 L287.8 148.6 L288.2 149.1 L288.6 149.5 L289.0 149.9 L289.4 150.2 L289.8 150.5 L290.2 150.7 L290.6 150.9 L291.0 151.1 L291.4 151.3 L291.8 151.5 L292.2 151.6 L292.6 151.6 L293.0 151.3 L293.4 150.0 L293.8 147.0 L294.2 141.5 L294.6 134.7 L295.0 129.5 L295.4 129.2 L295.8 132.0 L296.2 136.2 L296.6 140.6 L297.0 144.3 L297.4 146.9 L297.8 148.6 L298.2 149.5 L298.6 150.0 L299.0 150.4 L299.4 150.7 L299.8 150.9 L300.2 151.1 L300.6 151.3 L301.0 151.4 L301.4 151.6 L301.8 151.7 L302.2 151.8 L302.6 151.9 L303.0 152.0 L303.4 152.1 L303.8 152.1 L304.2 152.2 L304.6 152.2 L305.0 152.3 L305.4 152.3 L305.8 152.3 L306.2 152.4 L306.6 152.4 L307.0 152.4 L307.4 152.3 L307.8 151.7 L308.2 149.8 L308.6 145.4 L309.0 137.7 L309.4 128.4 L309.8 121.7 L310.2 121.6 L310.6 125.6 L311.0 131.3 L311.4 137.1 L311.8 142.0 L312.2 145.4 L312.6 147.5 L313.0 148.7 L313.4 149.4 L313.8 149.8 L314.2 150.2 L314.6 150.5 L315.0 150.7 L315.4 150.9 L315.8 151.1 L316.2 151.3 L316.6 151.5 L317.0 151.6 L317.4 151.7 L317.8 151.8 L318.2 151.9 L318.6 152.0 L319.0 152.1 L319.4 152.1 L319.8 152.2 L320.2 152.2 L320.6 152.3 L321.0 152.2 L321.4 152.0 L321.8 151.2 L322.2 149.6 L322.6 147.2 L323.0 144.8 L323.4 143.7 L323.8 144.3 L324.2 145.7 L324.6 147.3 L325.0 148.9 L325.4 150.1 L325.8 150.8 L326.2 151.3 L326.6 151.6 L327.0 151.7 L327.4 151.8 L327.8 151.9 L328.2 152.0 L328.6 152.1 L329.0 152.1 L329.4 152.2 L329.8 152.2 L330.2 152.3 L330.6 152.3 L331.0 152.4 L331.4 152.4 L331.8 152.4 L332.2 152.4 L332.6 152.5 L333.0 152.5 L333.4 152.5 L333.8 152.5 L334.2 152.5 L334.6 152.4 L335.0 152.2 L335.4 151.5 L335.8 150.4 L336.2 148.9 L336.6 147.7 L337.0 147.6 L337.4 148.1 L337.8 149.0 L338.2 150.0 L338.6 150.8 L339.0 151.4 L339.4 151.7 L339.8 151.9 L340.2 152.1 L340.6 152.1 L341.0 152.2 L341.4 152.2 L341.8 152.3 L342.2 152.3 L342.6 152.4 L343.0 152.4 L343.4 152.4 L343.8 152.4 L344.2 152.5 L344.6 152.5 L345.0 152.5 L345.4 152.5 L345.8 152.5 L346.2 152.5 L346.6 152.5 L347.0 152.5 L347.4 152.5 L347.8 152.5 L348.2 152.5 L348.6 152.3 L349.0 151.9 L349.4 151.4 L349.8 150.7 L350.2 150.4 L350.6 150.5 L351.0 150.8 L351.4 151.2 L351.8 151.6 L352.2 151.9 L352.6 152.1 L353.0 152.3 L353.4 152.3 L353.8 152.4 L354.2 152.4 L354.6 152.4 L355.0 152.5 L355.4 152.5 L355.8 152.5 L356.2 152.5 L356.6 152.5 L357.0 152.5 L357.4 152.5 L357.8 152.5 L358.2 152.5 L358.6 152.6 L359.0 152.6 L359.4 152.6 L359.8 152.6 L360.2 152.6 L360.6 152.6 L361.0 152.6 L361.4 152.6 L361.8 152.5 L362.2 152.3 L362.6 151.9 L363.0 151.4 L363.4 151.0 L363.8 150.9 L364.2 151.1 L364.6 151.4 L365.0 151.7 L365.4 152.0 L365.8 152.2 L366.2 152.3 L366.6 152.4 L367.0 152.4 L367.4 152.4 L367.8 152.5 L368.2 152.5 L368.6 152.5 L369.0 152.5 L369.4 152.5 L369.8 152.5 L370.2 152.5 L370.6 152.5 L371.0 152.5 L371.4 152.6 L371.8 152.6 L372.2 152.6 L372.6 152.6 L373.0 152.6 L373.4 152.6 L373.8 152.6 L374.2 152.6 L374.6 152.6 L375.0 152.5 L375.4 152.5 L375.8 152.2 L376.2 151.9 L376.6 151.5 L377.0 151.2 L377.4 151.2 L377.8 151.4 L378.2 151.7 L378.6 151.9 L379.0 152.2 L379.4 152.3 L379.8 152.4 L380.2 152.4 L380.6 152.5 L381.0 152.5 L381.4 152.5 L381.8 152.5 L382.2 152.5 L382.6 152.5 L383.0 152.5 L383.4 152.5 L383.8 152.5 L384.2 152.6 L384.6 152.6 L385.0 152.6 L385.4 152.6 L385.8 152.6 L386.2 152.6 L386.6 152.6 L387.0 152.6 L387.4 152.5 L387.8 152.4 L388.2 152.2 L388.6 151.9 L389.0 151.7 L389.4 151.7 L389.8 151.8 L390.2 152.0 L390.6 152.1 L391.0 152.3 L391.4 152.4 L391.8 152.4 L392.2 152.5 L392.6 152.5 L393.0 152.5 L393.4 152.5 L393.8 152.5 L394.2 152.5 L394.6 152.6 L395.0 152.6 L395.4 152.6 L395.8 152.6 L396.2 152.6 L396.6 152.6 L397.0 152.6 L397.4 152.6 L397.8 152.6 L398.2 152.6 L398.6 152.6 L399.0 152.6 L399.4 152.6 L399.8 152.6 L400.2 152.6 L400.6 152.6 L401.0 152.6 L401.4 152.6 L401.8 152.6 L402.2 152.5 L402.6 152.4 L403.0 152.3 L403.4 152.1 L403.8 151.9 L404.2 151.9 L404.6 152.0 L405.0 152.1 L405.4 152.3 L405.8 152.4 L406.2 152.4 L406.6 152.5 L407.0 152.5 L407.4 152.5 L407.8 152.5 L408.2 152.5 L408.6 152.6 L409.0 152.6 L409.4 152.6 L409.8 152.6 L410.2 152.6 L410.6 152.6 L411.0 152.6 L411.4 152.6 L411.8 152.6 L412.2 152.6 L412.6 152.6 L413.0 152.6 L413.4 152.6 L413.8 152.6 L414.2 152.6 L414.6 152.6 L415.0 152.6 L415.4 152.6 L415.8 152.6 L416.2 152.6 L416.6 152.6 L417.0 152.6 L417.4 152.6 L417.8 152.6 L418.2 152.6 L418.6 152.6 L419.0 152.6 L419.4 152.6 L419.8 152.6 L420.2 152.6 L420.6 152.6 L421.0 152.6 L421.4 152.6 L421.8 152.6 L422.2 152.6 L422.6 152.6 L423.0 152.6 L423.4 152.6 L423.8 152.6 L424.2 152.6 L424.6 152.6 L425.0 152.6 L425.4 152.6 L425.8 152.6 L426.2 152.6 L426.6 152.6 L427.0 152.6 L427.4 152.6 L427.8 152.5 L428.2 152.3 L428.6 152.0 L429.0 151.6 L429.4 151.4 L429.8 151.5 L430.2 151.6 L430.6 151.8 L431.0 152.1 L431.4 152.2 L431.8 152.3 L432.2 152.4 L432.6 152.5 L433.0 152.5 L433.4 152.5 L433.8 152.5 L434.2 152.5 L434.6 152.5 L435.0 152.5 L435.4 152.5 L435.8 152.6 L436.2 152.6 L436.6 152.6 L437.0 152.6 L437.4 152.6 L437.8 152.6 L438.2 152.6 L438.6 152.6 L439.0 152.6 L439.4 152.6 L439.8 152.6 L440.2 152.6 L440.6 152.6 L441.0 152.6 L441.4 152.6 L441.8 152.6 L442.2 152.6 L442.6 152.5 L443.0 152.4 L443.4 152.2 L443.8 151.9 L444.2 151.8 L444.6 151.8 L445.0 152.0 L445.4 152.1 L445.8 152.2 L446.2 152.4 L446.6 152.4 L447.0 152.5 L447.4 152.5 L447.8 152.5 L448.2 152.5 L448.6 152.5 L449.0 152.5 L449.4 152.6 L449.8 152.6 L450.2 152.6 L450.6 152.6 L451.0 152.6 L451.4 152.6 L451.8 152.6 L452.2 152.6 L452.6 152.6 L453.0 152.6 L453.4 152.6 L453.8 152.6 L454.2 152.6 L454.6 152.6 L455.0 152.6 L455.4 152.5 L455.8 152.4 L456.2 152.1 L456.6 151.4 L457.0 150.5 L457.4 149.7 L457.8 149.4 L458.2 149.7 L458.6 150.3 L459.0 150.9 L459.4 151.4 L459.8 151.8 L460.2 152.0 L460.6 152.2 L461.0 152.3 L461.4 152.3 L461.8 152.3 L462.2 152.4 L462.6 152.4 L463.0 152.4 L463.4 152.4 L463.8 152.5 L464.2 152.5 L464.6 152.5 L465.0 152.5 L465.4 152.5 L465.8 152.5 L466.2 152.5 L466.6 152.5 L467.0 152.6 L467.4 152.6 L467.8 152.6 L468.2 152.6 L468.6 152.5 L469.0 152.3 L469.4 151.5 L469.8 149.8 L470.2 147.1 L470.6 143.8 L471.0 141.6 L471.4 141.8 L471.8 143.3 L472.2 145.3 L472.6 147.4 L473.0 149.0 L473.4 150.2 L473.8 150.8 L474.2 151.2 L474.6 151.5 L475.0 151.6 L475.4 151.8 L475.8 151.9 L476.2 151.9 L476.6 152.0 L477.0 152.1 L477.4 152.2 L477.8 152.2 L478.2 152.3 L478.6 152.3 L479.0 152.3 L479.4 152.4 L479.8 152.4 L480.2 152.4 L480.6 152.4 L481.0 152.5 L481.4 152.5 L481.8 152.4 L482.2 152.0 L482.6 150.7 L483.0 147.2 L483.4 140.2 L483.8 130.0 L484.2 120.2 L484.6 116.2 L485.0 119.2 L485.4 125.0 L485.8 131.8 L486.2 138.0 L486.6 142.7 L487.0 145.8 L487.4 147.5 L487.8 148.6 L488.2 149.2 L488.6 149.6 L489.0 150.0 L489.4 150.3 L489.8 150.6 L490.2 150.8 L490.6 151.0 L491.0 151.2 L491.4 151.4 L491.8 151.5 L492.2 151.6 L492.6 151.8 L493.0 151.9 L493.4 151.9 L493.8 152.0 L494.2 152.1 L494.6 152.1 L495.0 152.2 L495.4 152.1 L495.8 151.8 L496.2 150.6 L496.6 147.8 L497.0 142.9 L497.4 136.7 L497.8 132.1 L498.2 131.9 L498.6 134.4 L499.0 138.2 L499.4 142.1 L499.8 145.4 L500.2 147.7 L500.6 149.1 L501.0 149.9 L501.4 150.4 L501.8 150.7 L502.2 150.9 L502.6 151.1 L503.0 151.3 L503.4 151.5 L503.8 151.6 L504.2 151.7 L504.6 151.8 L505.0 151.9 L505.4 152.0 L505.8 152.1 L506.2 152.1 L506.6 152.2 L507.0 152.2 L507.4 152.3 L507.8 152.3 L508.2 152.3 L508.6 152.3 L509.0 152.0 L509.4 150.8 L509.8 147.4 L510.2 140.3 L510.6 129.4 L511.0 118.2 L511.4 112.5 L511.8 115.0 L512.2 121.1 L512.6 128.5 L513.0 135.6 L513.4 141.1 L513.8 144.6 L514.2 146.8 L514.6 148.0 L515.0 148.8 L515.4 149.3 L515.8 149.7 L516.2 150.0 L516.6 150.3 L517.0 150.6 L517.4 150.8 L517.8 151.0 L518.2 151.2 L518.6 151.4 L519.0 151.5 L519.4 151.7 L519.8 151.8 L520.2 151.9 L520.6 152.0 L521.0 152.0 L521.4 152.1 L521.8 152.1 L522.2 152.2 L522.6 152.0 L523.0 151.5 L523.4 150.1 L523.8 147.5 L524.2 144.1 L524.6 141.3 L525.0 140.8 L525.4 142.1 L525.8 144.1 L526.2 146.4 L526.6 148.3 L527.0 149.6 L527.4 150.5 L527.8 151.0 L528.2 151.3 L528.6 151.5 L529.0 151.6 L529.4 151.8 L529.8 151.9 L530.2 151.9 L530.6 152.0 L531.0 152.1 L531.4 152.1 L531.8 152.2 L532.2 152.2 L532.6 152.3 L533.0 152.3 L533.4 152.4 L533.8 152.4 L534.2 152.4 L534.6 152.4 L535.0 152.5 L535.4 152.5 L535.8 152.5 L536.2 152.4 L536.6 152.2 L537.0 151.7 L537.4 150.8 L537.8 149.9 L538.2 149.4 L538.6 149.5 L539.0 150.0 L539.4 150.6 L539.8 151.1 L540.2 151.6 L540.6 151.9 L541.0 152.1 L541.4 152.2 L541.8 152.3 L542.2 152.3 L542.6 152.4 L543.0 152.4 L543.4 152.4 L543.8 152.4 L544.2 152.4 L544.6 152.5 L545.0 152.5 L545.4 152.5 L545.8 152.5 L546.2 152.5 L546.6 152.5 L547.0 152.5 L547.4 152.5 L547.8 152.6 L548.2 152.6 L548.6 152.6 L549.0 152.6 L549.4 152.5 L549.8 152.5 L550.2 152.3 L550.6 151.9 L551.0 151.5 L551.4 151.0 L551.8 150.9 L552.2 151.1 L552.6 151.3 L553.0 151.7 L553.4 151.9 L553.8 152.2 L554.2 152.3 L554.6 152.4 L555.0 152.4 L555.4 152.3 L555.8 152.1 L556.2 151.8 L556.6 151.4 L557.0 151.2 L557.4 151.3 L557.8 151.5 L558.2 151.7 L558.6 152.0 L559.0 152.2 L559.4 152.3 L559.8 152.4 L560.2 152.4 L560.6 152.4 L561.0 152.5 L561.4 152.5 L561.8 152.5 L562.2 152.5 L562.6 152.5 L563.0 152.5 L563.4 152.4 L563.8 152.3 L564.2 152.1 L564.6 151.8 L565.0 151.6 L565.4 151.6 L565.8 151.7 L566.2 151.9 L566.6 152.1 L567.0 152.3 L567.4 152.4 L567.8 152.4 L568.2 152.5 L568.6 152.5 L569.0 152.5 L569.4 152.5 L569.8 152.5 L570.2 152.5 L570.6 152.5 L571.0 152.5 L571.4 152.6 L571.8 152.6 L572.2 152.6 L572.6 152.6 L573.0 152.6 L573.4 152.6 L573.8 152.6 L574.2 152.6 L574.6 152.6 L575.0 152.6 L575.4 152.6 L575.8 152.6 L576.2 152.6 L576.6 152.6 L577.0 152.6 L577.4 152.6 L577.8 152.6 L578.2 152.6 L578.6 152.6 L579.0 152.6 L579.4 152.6 L579.8 152.6 L580.2 152.6 L580.6 152.6 L581.0 152.6 L581.4 152.6 L581.8 152.6 L582.2 152.6 L582.6 152.6 L583.0 152.6 L583.4 152.6 L583.8 152.6 L584.2 152.6 L584.6 152.6 L585.0 152.6 L585.4 152.6 L585.8 152.6 L586.2 152.6 L586.6 152.6 L587.0 152.6 L587.4 152.6 L587.8 152.6 L588.2 152.6 L588.6 152.6 L589.0 152.6 L589.4 152.6 L589.8 152.6 L590.2 152.6 L590.6 152.6 L591.0 152.6 L591.4 152.5 L591.8 152.4 L592.2 152.1 L592.6 151.8 L593.0 151.4 L593.4 151.3 L593.8 151.4 L594.2 151.6 L594.6 151.9 L595.0 152.1 L595.4 152.3 L595.8 152.4 L596.2 152.4 L596.6 152.5 L597.0 152.5 L597.4 152.5 L597.8 152.5 L598.2 152.5 L598.6 152.5 L599.0 152.5 L599.4 152.5 L599.8 152.6 L600.2 152.6 L600.6 152.6 L601.0 152.6 L601.4 152.6 L601.8 152.6 L602.2 152.6 L602.6 152.6 L603.0 152.6 L603.4 152.6 L603.8 152.6 L604.2 152.6 L604.6 152.6 L605.0 152.5 L605.4 152.4 L605.8 152.3 L606.2 152.1 L606.6 151.9 L607.0 151.9 L607.4 152.0 L607.8 152.1 L608.2 152.3 L608.6 152.4 L609.0 152.4 L609.4 152.5 L609.8 152.5 L610.2 152.5 L610.6 152.5 L611.0 152.5 L611.4 152.6 L611.8 152.6 L612.2 152.6 L612.6 152.6 L613.0 152.6 L613.4 152.6 L613.8 152.6 L614.2 152.6 L614.6 152.6 L615.0 152.6 L615.4 152.6 L615.8 152.6 L616.2 152.6 L616.6 152.6 L617.0 152.6 L617.4 152.6 L617.8 152.6 L618.2 152.6 L618.6 152.6 L619.0 152.6 L619.4 152.6 L619.8 152.6 L620.2 152.6 L620.6 152.6 L621.0 152.6 L621.4 152.6 L621.8 152.6 L622.2 152.6 L622.6 152.6 L623.0 152.6 L623.4 152.6 L623.8 152.6 L624.2 152.6 L624.6 152.6 L625.0 152.6 L625.4 152.6 L625.8 152.6 L626.2 152.6 L626.6 152.6 L627.0 152.6 L627.4 152.6 L627.8 152.6 L628.2 152.6 L628.6 152.6 L629.0 152.6 L629.4 152.6 L629.8 152.6 L630.2 152.5 L630.6 152.4 L631.0 152.1 L631.4 151.6 L631.8 151.0 L632.2 150.6 L632.6 150.7 L633.0 151.0 L633.4 151.3 L633.8 151.7 L634.2 152.0 L634.6 152.2 L635.0 152.3 L635.4 152.4 L635.8 152.4 L636.2 152.4 L636.6 152.5 L637.0 152.5 L637.4 152.5 L637.8 152.5 L638.2 152.5 L638.6 152.5 L639.0 152.5 L639.4 152.5 L639.8 152.5" fill="none" stroke="#4b57b4" stroke-width="0.800" stroke-linejoin="round"/><text x="263.2" y="148.9" font-size="6.400" fill="#a8432c" text-anchor="middle">296.2</text><text x="276.0" y="138.9" font-size="6.400" fill="#a8432c" text-anchor="middle">297.1</text><text x="290.5" y="89.9" font-size="6.400" fill="#a8432c" text-anchor="middle">298.2</text><text x="303.0" y="127.7" font-size="6.400" fill="#a8432c" text-anchor="middle">299.1</text><text x="317.0" y="118.4" font-size="6.400" fill="#a8432c" text-anchor="middle">300.2</text><text x="331.0" y="142.1" font-size="6.400" fill="#a8432c" text-anchor="middle">301.2</text><text x="358.6" y="148.5" font-size="6.400" fill="#a8432c" text-anchor="middle">303.2</text><text x="384.8" y="149.2" font-size="6.400" fill="#a8432c" text-anchor="middle">305.2</text><text x="437.8" y="149.2" font-size="6.400" fill="#a8432c" text-anchor="middle">309.1</text><text x="464.6" y="146.7" font-size="6.400" fill="#a8432c" text-anchor="middle">311.2</text><text x="478.5" y="137.5" font-size="6.400" fill="#a8432c" text-anchor="middle">312.2</text><text x="492.3" y="114.4" font-size="6.400" fill="#a8432c" text-anchor="middle">313.2</text><text x="505.5" y="129.9" font-size="6.400" fill="#a8432c" text-anchor="middle">314.2</text><text x="519.4" y="110.4" font-size="6.400" fill="#a8432c" text-anchor="middle">315.2</text><text x="533.0" y="138.1" font-size="6.400" fill="#a8432c" text-anchor="middle">316.2</text><text x="559.4" y="148.9" font-size="6.400" fill="#a8432c" text-anchor="middle">318.2</text><text x="600.0" y="148.9" font-size="6.400" fill="#a8432c" text-anchor="middle">321.3</text><text x="640.8" y="148.9" font-size="6.400" fill="#a8432c" text-anchor="middle">324.3</text><rect x="255.8" y="147.2" width="1" height="1.400" fill="#c4452e"/><rect x="267.9" y="142.0" width="1" height="1.400" fill="#c4452e"/><rect x="282.6" y="88.1" width="1" height="1.400" fill="#c4452e"/><rect x="294.7" y="125.6" width="1" height="1.400" fill="#c4452e"/><rect x="309.5" y="117.4" width="1" height="1.400" fill="#c4452e"/><rect x="322.9" y="140.4" width="1" height="1.400" fill="#c4452e"/><rect x="336.4" y="144.1" width="1" height="1.400" fill="#c4452e"/><rect x="349.8" y="147.0" width="1" height="1.400" fill="#c4452e"/><rect x="363.2" y="147.5" width="1" height="1.400" fill="#c4452e"/><rect x="376.7" y="147.8" width="1" height="1.400" fill="#c4452e"/><rect x="429.0" y="148.0" width="1" height="1.400" fill="#c4452e"/><rect x="457.2" y="146.0" width="1" height="1.400" fill="#c4452e"/><rect x="470.7" y="138.0" width="1" height="1.400" fill="#c4452e"/><rect x="484.1" y="112.8" width="1" height="1.400" fill="#c4452e"/><rect x="497.5" y="128.1" width="1" height="1.400" fill="#c4452e"/><rect x="511.0" y="109.1" width="1" height="1.400" fill="#c4452e"/><rect x="524.4" y="137.4" width="1" height="1.400" fill="#c4452e"/><rect x="537.8" y="146.0" width="1" height="1.400" fill="#c4452e"/><rect x="551.2" y="147.5" width="1" height="1.400" fill="#c4452e"/><rect x="556.6" y="147.9" width="1" height="1.400" fill="#c4452e"/><rect x="592.9" y="147.9" width="1" height="1.400" fill="#c4452e"/><rect x="631.8" y="147.2" width="1" height="1.400" fill="#c4452e"/></g><text transform="translate(213.400 118.600) rotate(-90)" font-size="8.200" font-weight="bold" fill="#1a1a1a" text-anchor="middle" textLength="35.500" lengthAdjust="spacingAndGlyphs">Intensity</text><text x="202" y="165.200" font-size="5.600" font-weight="bold" fill="#111" stroke="#222" stroke-width="0.500" textLength="15.800" lengthAdjust="spacingAndGlyphs">质荷比</text><text x="202" y="169.600" font-size="5.200" font-weight="bold" fill="#111" stroke="#222" stroke-width="0.400" textLength="15.800" lengthAdjust="spacingAndGlyphs">m/z Da</text><rect x="633.600" y="153.600" width="14.600" height="14" fill="#e9e3e8"/><path d="M633.600 153.600v14h14.600" fill="none" stroke="#666" stroke-width="0.700"/><path d="M635 164.500l2.400-3 2 1.600 2.600-4 2.400 2.600 2-1.600" fill="none" stroke="#d0607a" stroke-width="0.800"/></svg>
<div style="position:absolute;left:200.4px;top:174px;width:448px;height:10.6px;background:#f3f3f3;"></div>
<div style="position:absolute;left:200.4px;top:184.4px;width:448px;height:36px;background:#e6f0fa;"></div>
<span style="position:absolute;left:203.8px;top:176.17px;font-size:6.2px;line-height:8.06px;color:#6a6a6a;white-space:nowrap;letter-spacing:0.062px;">色谱</span>
<div style="position:absolute;left:220px;top:179px;width:392px;height:2.4px;background:repeating-linear-gradient(90deg,#e2e2e2 0 1px,#f3f3f3 1px 2px);"></div>
<svg style="position:absolute;left:622px;top:176px" width="26" height="9" viewBox="622 176 26 9"><path d="M624.4 180h3.400l-1.700 1.900z" fill="#777"/><path d="M633.200 177.600h2.200v3.600h-2.200zM634.300 181.200v1.600M632.600 181.200h3.400" fill="none" stroke="#777" stroke-width="0.600"/><path d="M641.500 178.200l3.200 3.400M644.700 178.200l-3.200 3.400" stroke="#777" stroke-width="0.700"/></svg>
<span style="position:absolute;left:205.4px;top:190.97px;font-size:6.2px;line-height:8.06px;color:#2a2a2a;white-space:nowrap;letter-spacing:0.013px;">修剪</span>
<span style="position:absolute;left:223.2px;top:190.97px;font-size:6.2px;line-height:8.06px;color:#2a2a2a;white-space:nowrap;letter-spacing:0.263px;">底部</span>
<div style="position:absolute;left:238.4px;top:188.6px;width:25.9px;height:11.6px;background:#ffffff;border:0.6px solid #c6ccd4;box-sizing:border-box;"></div>
<span style="position:absolute;left:240.8px;top:191.21px;font-size:6.3px;line-height:8.19px;color:#222;white-space:nowrap;">4.00</span>
<svg style="position:absolute;left:258.7px;top:189.6px" width="5" height="9.6" viewBox="0 0 5 10" preserveAspectRatio="none"><path d="M0.8 4L2.5 1.6 4.2 4zM0.8 6L2.5 8.4 4.2 6z" fill="#222"/></svg>
<span style="position:absolute;left:267.3px;top:190.97px;font-size:6.2px;line-height:8.06px;color:#2a2a2a;white-space:nowrap;letter-spacing:0.312px;">顶部</span>
<div style="position:absolute;left:283.3px;top:188.6px;width:28.2px;height:11.6px;background:#ffffff;border:0.6px solid #c6ccd4;box-sizing:border-box;"></div>
<span style="position:absolute;left:285.7px;top:191.21px;font-size:6.3px;line-height:8.19px;color:#222;white-space:nowrap;">36.00</span>
<svg style="position:absolute;left:305.9px;top:189.6px" width="5" height="9.6" viewBox="0 0 5 10" preserveAspectRatio="none"><path d="M0.8 4L2.5 1.6 4.2 4zM0.8 6L2.5 8.4 4.2 6z" fill="#222"/></svg>
<svg style="position:absolute;left:313.8px;top:189.6px" width="8" height="9" viewBox="0 0 8 9"><path d="M2 4.200v-1.600a1.900 1.900 0 0 1 3.800 0v1.600" fill="none" stroke="#b8860b" stroke-width="0.900"/><rect x="0.500" y="3.900" width="6.800" height="4.600" rx="0.800" fill="#e9b030" stroke="#b07d10" stroke-width="0.500"/></svg>
<span style="position:absolute;left:322.3px;top:190.97px;font-size:6.2px;line-height:8.06px;color:#1e1e1e;white-space:nowrap;font-weight:bold;letter-spacing:-0.160px;">锁XY轴</span>
<svg style="position:absolute;left:346px;top:189.6px" width="8" height="9" viewBox="0 0 8 9"><path d="M2 4.200v-1.600a1.900 1.900 0 0 1 3.800 0v1.600" fill="none" stroke="#b8860b" stroke-width="0.900"/><rect x="0.500" y="3.900" width="6.800" height="4.600" rx="0.800" fill="#e9b030" stroke="#b07d10" stroke-width="0.500"/></svg>
<span style="position:absolute;left:354.6px;top:190.97px;font-size:6.2px;line-height:8.06px;color:#1e1e1e;white-space:nowrap;font-weight:bold;letter-spacing:0.081px;">锁Z轴</span>
<span style="position:absolute;left:374.6px;top:190.97px;font-size:6.2px;line-height:8.06px;color:#2a2a2a;white-space:nowrap;letter-spacing:0.362px;">激光斑点</span>
<div style="position:absolute;left:403.2px;top:188.6px;width:24.5px;height:11.6px;background:#ffffff;border:0.6px solid #c6ccd4;box-sizing:border-box;"></div>
<span style="position:absolute;left:405.59999999999997px;top:191.21px;font-size:6.3px;line-height:8.19px;color:#222;white-space:nowrap;">10</span>
<svg style="position:absolute;left:422.09999999999997px;top:189.6px" width="5" height="9.6" viewBox="0 0 5 10" preserveAspectRatio="none"><path d="M0.8 4L2.5 1.6 4.2 4zM0.8 6L2.5 8.4 4.2 6z" fill="#222"/></svg>
<span style="position:absolute;left:432.3px;top:190.97px;font-size:6.2px;line-height:8.06px;color:#2a2a2a;white-space:nowrap;letter-spacing:-0.338px;">平滑</span>
<span style="position:absolute;left:446px;top:190.71px;font-size:6.6px;line-height:8.58px;color:#2a2a2a;white-space:nowrap;letter-spacing:0.043px;">Size</span>
<div style="position:absolute;left:461.5px;top:188.6px;width:26.8px;height:11.6px;background:#ffffff;border:0.6px solid #c6ccd4;box-sizing:border-box;"></div>
<span style="position:absolute;left:463.9px;top:191.21px;font-size:6.3px;line-height:8.19px;color:#222;white-space:nowrap;">2</span>
<svg style="position:absolute;left:482.7px;top:189.6px" width="5" height="9.6" viewBox="0 0 5 10" preserveAspectRatio="none"><path d="M0.8 4L2.5 1.6 4.2 4zM0.8 6L2.5 8.4 4.2 6z" fill="#222"/></svg>
<span style="position:absolute;left:491.4px;top:190.71px;font-size:6.6px;line-height:8.58px;color:#2a2a2a;white-space:nowrap;letter-spacing:-0.061px;">Sigma</span>
<div style="position:absolute;left:512.3px;top:188.6px;width:27.1px;height:11.6px;background:#ffffff;border:0.6px solid #c6ccd4;box-sizing:border-box;"></div>
<span style="position:absolute;left:514.6999999999999px;top:191.21px;font-size:6.3px;line-height:8.19px;color:#222;white-space:nowrap;">0.50</span>
<svg style="position:absolute;left:533.8px;top:189.6px" width="5" height="9.6" viewBox="0 0 5 10" preserveAspectRatio="none"><path d="M0.8 4L2.5 1.6 4.2 4zM0.8 6L2.5 8.4 4.2 6z" fill="#222"/></svg>
<span style="position:absolute;left:542.2px;top:190.97px;font-size:6.2px;line-height:8.06px;color:#2a2a2a;white-space:nowrap;letter-spacing:-0.037px;">亮度</span>
<div style="position:absolute;left:557px;top:188.6px;width:26.7px;height:11.6px;background:#ffffff;border:0.6px solid #c6ccd4;box-sizing:border-box;"></div>
<span style="position:absolute;left:559.4px;top:191.21px;font-size:6.3px;line-height:8.19px;color:#222;white-space:nowrap;">0.20</span>
<svg style="position:absolute;left:578.1px;top:189.6px" width="5" height="9.6" viewBox="0 0 5 10" preserveAspectRatio="none"><path d="M0.8 4L2.5 1.6 4.2 4zM0.8 6L2.5 8.4 4.2 6z" fill="#222"/></svg>
<span style="position:absolute;left:586.2px;top:190.97px;font-size:6.2px;line-height:8.06px;color:#2a2a2a;white-space:nowrap;letter-spacing:0.146px;">饱和度</span>
<div style="position:absolute;left:607.9px;top:188.6px;width:29px;height:11.6px;background:#ffffff;border:0.6px solid #c6ccd4;box-sizing:border-box;"></div>
<span style="position:absolute;left:610.3px;top:191.21px;font-size:6.3px;line-height:8.19px;color:#222;white-space:nowrap;">14.50</span>
<svg style="position:absolute;left:631.3px;top:189.6px" width="5" height="9.6" viewBox="0 0 5 10" preserveAspectRatio="none"><path d="M0.8 4L2.5 1.6 4.2 4zM0.8 6L2.5 8.4 4.2 6z" fill="#222"/></svg>
<span style="position:absolute;left:205.4px;top:207.77px;font-size:6.2px;line-height:8.06px;color:#2a2a2a;white-space:nowrap;letter-spacing:0.013px;">显示</span>
<div style="position:absolute;left:221px;top:205.4px;width:0.6px;height:12px;background:#c5d3e2;"></div>
<div style="position:absolute;left:224.7px;top:208.1px;width:7.2px;height:7.2px;background:#ffffff;border:0.6px solid #6a6a6a;box-sizing:border-box;"></div>
<span style="position:absolute;left:235.4px;top:207.77px;font-size:6.2px;line-height:8.06px;color:#2a2a2a;white-space:nowrap;letter-spacing:-0.138px;">背景</span>
<div style="position:absolute;left:250.4px;top:208.1px;width:7.2px;height:7.2px;background:#ffffff;border:0.6px solid #6a6a6a;box-sizing:border-box;"></div>
<span style="position:absolute;left:260.5px;top:207.77px;font-size:6.2px;line-height:8.06px;color:#2a2a2a;white-space:nowrap;letter-spacing:0.062px;">靶点</span>
<div style="position:absolute;left:275.9px;top:208.1px;width:7.2px;height:7.2px;background:#ffffff;border:0.6px solid #6a6a6a;box-sizing:border-box;"></div>
<span style="position:absolute;left:286px;top:207.77px;font-size:6.2px;line-height:8.06px;color:#2a2a2a;white-space:nowrap;letter-spacing:0.062px;">反转</span>
<div style="position:absolute;left:301.6px;top:208.1px;width:7.2px;height:7.2px;background:#ffffff;border:0.6px solid #6a6a6a;box-sizing:border-box;"></div>
<span style="position:absolute;left:311.5px;top:207.77px;font-size:6.2px;line-height:8.06px;color:#2a2a2a;white-space:nowrap;letter-spacing:-0.037px;">靶图</span>
<div style="position:absolute;left:327.1px;top:208.1px;width:7.2px;height:7.2px;background:#ffffff;border:0.6px solid #6a6a6a;box-sizing:border-box;"></div>
<span style="position:absolute;left:337px;top:207.51px;font-size:6.6px;line-height:8.58px;color:#2a2a2a;white-space:nowrap;letter-spacing:0.171px;">Log10</span>
<div style="position:absolute;left:359.2px;top:208.1px;width:7.2px;height:7.2px;background:#ffffff;border:0.6px solid #6a6a6a;box-sizing:border-box;"></div>
<span style="position:absolute;left:368.5px;top:207.77px;font-size:6.2px;line-height:8.06px;color:#2a2a2a;white-space:nowrap;letter-spacing:-0.335px;">抽稀XY</span>
<span style="position:absolute;left:390.6px;top:207.25px;font-size:7.0px;line-height:9.1px;color:#2a2a2a;white-space:nowrap;letter-spacing:0.086px;">Blend: Color Temperature</span>
<svg style="position:absolute;left:473.600px;top:209.600px" width="5" height="4" viewBox="0 0 5 4"><path d="M0.600 0.800h3.600l-1.800 2.400z" fill="#333"/></svg>
<svg style="position:absolute;left:642px;top:196px" width="7" height="26" viewBox="0 0 7 26"><path d="M1.600 1.600h4M1.400 3.400l2.200 2.200 2.200-2.200zM1.600 18.400h4M1.400 20.200l2.200 2.200 2.200-2.200z" stroke="#a9a4c6" stroke-width="0.500" fill="#a9a4c6"/></svg>
<svg style="position:absolute;left:201px;top:220px" width="447" height="219" viewBox="201 220 447 219" font-family="'Liberation Sans',sans-serif"><defs><filter id="hb1" x="-30%" y="-30%" width="160%" height="160%"><feGaussianBlur stdDeviation="1.1"/></filter><filter id="hb2" x="-30%" y="-30%" width="160%" height="160%"><feGaussianBlur stdDeviation="2.2"/></filter><filter id="hb0" x="-30%" y="-30%" width="160%" height="160%"><feGaussianBlur stdDeviation="0.55"/></filter><filter id="spD" x="-10%" y="-10%" width="120%" height="120%" color-interpolation-filters="sRGB"><feTurbulence type="fractalNoise" baseFrequency="0.36" numOctaves="2" seed="5" result="n"/><feColorMatrix in="n" type="matrix" values="0 0 0 0 0  0 0 0 0 0  0 0 0 0 0  1 0 0 0 0" result="na"/><feGaussianBlur in="SourceAlpha" stdDeviation="2.6" result="m"/><feComposite in="na" in2="m" operator="arithmetic" k1="0" k2="6" k3="3.2" k4="-5.9" result="t"/><feFlood flood-color="#10328a" result="f"/><feComposite in="f" in2="t" operator="in"/></filter><filter id="spB" x="-10%" y="-10%" width="120%" height="120%" color-interpolation-filters="sRGB"><feTurbulence type="fractalNoise" baseFrequency="0.34" numOctaves="2" seed="11" result="n"/><feColorMatrix in="n" type="matrix" values="0 0 0 0 0  0 0 0 0 0  0 0 0 0 0  1 0 0 0 0" result="na"/><feGaussianBlur in="SourceAlpha" stdDeviation="2" result="m"/><feComposite in="na" in2="m" operator="arithmetic" k1="0" k2="6" k3="1.2" k4="-4.45" result="t"/><feFlood flood-color="#2b7ad6" result="f"/><feComposite in="f" in2="t" operator="in"/></filter><filter id="spG" x="-10%" y="-10%" width="120%" height="120%" color-interpolation-filters="sRGB"><feTurbulence type="fractalNoise" baseFrequency="0.4" numOctaves="2" seed="29" result="n"/><feColorMatrix in="n" type="matrix" values="0 0 0 0 0  0 0 0 0 0  0 0 0 0 0  1 0 0 0 0" result="na"/><feGaussianBlur in="SourceAlpha" stdDeviation="2" result="m"/><feComposite in="na" in2="m" operator="arithmetic" k1="0" k2="6" k3="1.0" k4="-4.45" result="t"/><feFlood flood-color="#8fe69a" result="f"/><feComposite in="f" in2="t" operator="in"/></filter><filter id="spR" x="-10%" y="-10%" width="120%" height="120%" color-interpolation-filters="sRGB"><feTurbulence type="fractalNoise" baseFrequency="0.5" numOctaves="2" seed="17" result="n"/><feColorMatrix in="n" type="matrix" values="0 0 0 0 0  0 0 0 0 0  0 0 0 0 0  1 0 0 0 0" result="na"/><feGaussianBlur in="SourceAlpha" stdDeviation="1" result="m"/><feComposite in="na" in2="m" operator="arithmetic" k1="0" k2="6" k3="1.0" k4="-4.8" result="t"/><feFlood flood-color="#f2b050" result="f"/><feComposite in="f" in2="t" operator="in"/></filter><filter id="spD2" x="-10%" y="-10%" width="120%" height="120%" color-interpolation-filters="sRGB"><feTurbulence type="fractalNoise" baseFrequency="0.4" numOctaves="2" seed="9" result="n"/><feColorMatrix in="n" type="matrix" values="0 0 0 0 0  0 0 0 0 0  0 0 0 0 0  1 0 0 0 0" result="na"/><feGaussianBlur in="SourceAlpha" stdDeviation="2" result="m"/><feComposite in="na" in2="m" operator="arithmetic" k1="0" k2="6" k3="2.0" k4="-5.2" result="t"/><feFlood flood-color="#143c94" result="f"/><feComposite in="f" in2="t" operator="in"/></filter><filter id="spO" x="-10%" y="-10%" width="120%" height="120%" color-interpolation-filters="sRGB"><feTurbulence type="fractalNoise" baseFrequency="0.45" numOctaves="2" seed="13" result="n"/><feColorMatrix in="n" type="matrix" values="0 0 0 0 0  0 0 0 0 0  0 0 0 0 0  1 0 0 0 0" result="na"/><feGaussianBlur in="SourceAlpha" stdDeviation="2" result="m"/><feComposite in="na" in2="m" operator="arithmetic" k1="0" k2="6" k3="2.6" k4="-5.4" result="t"/><feFlood flood-color="#f05a30" result="f"/><feComposite in="f" in2="t" operator="in"/></filter><filter id="spY" x="-10%" y="-10%" width="120%" height="120%" color-interpolation-filters="sRGB"><feTurbulence type="fractalNoise" baseFrequency="0.6" numOctaves="2" seed="41" result="n"/><feColorMatrix in="n" type="matrix" values="0 0 0 0 0  0 0 0 0 0  0 0 0 0 0  1 0 0 0 0" result="na"/><feGaussianBlur in="SourceAlpha" stdDeviation="2.5" result="m"/><feComposite in="na" in2="m" operator="arithmetic" k1="0" k2="7" k3="2.6" k4="-5.6" result="t"/><feFlood flood-color="#e6e04a" result="f"/><feComposite in="f" in2="t" operator="in"/></filter><clipPath id="hc"><path d="M399.6 244.8 L420.5 244.8 L420.5 251.4 L462 251.4 L462 258.6 L475.3 258.6 L475.3 265.7 L482 265.7 L482 272.2 L489 272.2 L489 292.6 L495.9 292.6 L495.9 306.2 L503.4 306.2 L503.4 319.5 L510.3 319.5 L510.3 360.8 L503.3 360.8 L503.3 375.2 L496.3 375.2 L496.3 396.1 L482.4 396.1 L482.4 403.1 L468.5 403.1 L468.5 410 L441.2 410 L441.2 415.8 L420.2 415.8 L420.2 409.4 L392.6 409.4 L392.6 402.6 L385.8 402.6 L385.8 395.8 L378.3 395.8 L378.3 388.3 L371.8 388.3 L371.8 375 L365.2 375 L365.2 353 L358.6 353 L358.6 334.5 L365.2 334.5 L365.2 306.4 L371.9 306.4 L371.9 279.5 L378.4 279.5 L378.4 265.6 L385.3 265.6 L385.3 251.7 L399.6 251.7Z"/></clipPath><clipPath id="lobe"><ellipse cx="415.5" cy="273" rx="24.5" ry="21"/></clipPath></defs><rect x="201" y="220.300" width="447" height="218.700" fill="#020202"/><g clip-path="url(#hc)"><rect x="355" y="240" width="160" height="180" fill="#4fc6e4"/><g filter="url(#hb1)"><path d="M360 312L360 240L465 240L465 262L452 264L444 276L440 292L425 297L404 292L392 284L384 300L380 318L374 333L362 352L356 352L368 330L374 312Z" fill="#f23a2c"/><path d="M373 284L380 280L382 292L379 306L375 316L372 302Z" fill="#b4d868"/><path d="M372 282L382 277L380 292L373 298Z" fill="#e8a060"/><path d="M356 334L366 306L374 306L377 318L370 336L360 353L356 353Z" fill="#45b5e4"/><path d="M358 352L366 340L372 352L380 376L395 395L416 405L434 409L441 417L419 417L392 410L378 396L365 376Z" fill="#8fdc78"/><path d="M364 352L372 362L377 376L384 385L394 392L406 400L418 406L418 411L392 411L385 404L377 397L370 389L364 377Z" fill="#f5362a"/><path d="M358 352L367 343L370 350L363 360Z" fill="#f0503a"/><path d="M434 409L452 404L471 399L486 391L498 376L506 352L512 352L512 412L440 418Z" fill="#a4de6c"/><path d="M498 320L512 318L512 362L503 362Z" fill="#58c4dc"/><path d="M452 250L464 250L464 257L477 257L477 264L484 264L484 271L491 271L491 292L497 294L497 306L490 304L488 288L484 276L477 268L464 262L452 264Z" fill="#f2553a"/><path d="M438 254L450 254L452 264L446 274L443 288L438 290L441 272Z" fill="#f2452e"/></g><g filter="url(#hb0)" fill="none" stroke-linecap="round"><path d="M378.500 296C379 310 377 322 371 334C367 342 362 348 357 354" stroke="#f4402c" stroke-width="5"/><path d="M367 343C371 358 376 370 384 382C393 394 405 402 420 406C428 408 432 408.500 436 408.500" stroke="#ee8a3a" stroke-width="1.500"/><path d="M436 408.500C446 406 458 403 470 398.500C482 393 492 383 499 368C503 359 505.500 347 506 334C506.500 326 504 318 500 310" stroke="#f06a34" stroke-width="1.800"/></g><g filter="url(#hb2)"><path d="M382 296L396 290L420 298L436 296L440 304L425 316L404 318L390 322L381 318Z" fill="#7fe08a"/><path d="M388 296L404 294L414 300L400 308L388 306Z" fill="#c4e45a"/><path d="M446 268L462 262L478 268L488 284L492 300L486 304L470 300L456 302L448 296Z" fill="#8fe07a"/><path d="M452 270L472 266L484 280L480 288L462 280L452 282Z" fill="#cfe255"/><path d="M462 300L476 302L488 318L492 332L484 330L472 316Z" fill="#a8e06a"/><path d="M440 304L452 300L462 312L470 326L462 330L452 320Z" fill="#8ee090"/><path d="M404 312L424 306L436 312L440 330L434 350L418 356L404 348L398 330Z" fill="#3a8cdc"/><path d="M440 306L450 304L458 322L460 342L448 346L442 330Z" fill="#3a8cdc"/><path d="M400 356L420 352L440 360L452 372L440 388L418 390L402 380Z" fill="#3a8cdc"/><path d="M452 340L470 332L488 338L494 356L484 372L464 378L450 366Z" fill="#3a8cdc"/><path d="M470 318L490 322L500 338L494 346L480 336Z" fill="#3a8edc"/><path d="M436 378L452 372L466 380L468 394L452 402L438 398Z" fill="#86e08a"/><path d="M444 382L454 378L460 388L452 396L444 392Z" fill="#cfe25a"/></g><g filter="url(#hb1)"><ellipse cx="415.500" cy="273" rx="24.500" ry="21" fill="#46aee4"/><g clip-path="url(#lobe)"><ellipse cx="425" cy="274" rx="15" ry="15" fill="#79df8c"/><ellipse cx="429" cy="277" rx="9" ry="11" fill="#bfe060"/><ellipse cx="430" cy="280" rx="6" ry="8" fill="#f0803a"/><ellipse cx="403" cy="268" rx="9" ry="13" fill="#48b4e6"/></g><path d="M397 289C404 296 414 299 425 298C433 297 439 294 443 289" fill="none" stroke="#f0402c" stroke-width="2.600"/><path d="M398 294C406 301 418 303 430 301C437 300 442 297 446 293" fill="none" stroke="#2a6cc8" stroke-width="1.500"/></g><g clip-path="url(#lobe)"><ellipse cx="404" cy="270" rx="12" ry="17" filter="url(#spB)"/><ellipse cx="402" cy="266" rx="8" ry="14" filter="url(#spD2)"/><ellipse cx="428" cy="277" rx="9" ry="11" filter="url(#spO)"/><ellipse cx="424" cy="272" rx="13" ry="14" filter="url(#spY)" opacity="0.700"/></g><path d="M380 320C378 330 372 338 372 338C371 356 378 372 386 384C396 396 410 404 436 408C456 405 472 398 486 388C498 374 505 352 505 334C505 322 500 312 494 306L472 302L452 301L440 305L425 317L404 319L390 323Z" filter="url(#spB)" opacity="0.850"/><path d="M446 268L462 262L478 268L488 284L492 300L486 304L470 300L456 302L448 296Z" filter="url(#spY)" opacity="0.800"/><path d="M382 296L396 290L420 298L436 296L440 304L425 316L404 318L390 322L381 318Z" filter="url(#spY)" opacity="0.600"/><path d="M380 296C381 312 378 326 372 338C371 356 378 372 386 384C396 396 410 404 436 408C456 405 472 398 486 388C498 374 505 352 505 334C505 320 498 306 492 298C490 284 486 272 476 266C466 262 452 262 446 268C442 282 440 292 428 298C412 300 400 294 394 286C388 288 383 292 380 296Z" filter="url(#spG)" opacity="0.700"/><rect x="355" y="240" width="160" height="180" filter="url(#spR)" opacity="0.550"/><g filter="url(#spD)"><path d="M406 312L424 308L436 314L438 332L432 350L416 354L406 346L402 330Z"/><path d="M442 306L450 306L456 322L458 342L448 344L444 330Z"/><path d="M410 362L422 358L436 364L442 372L434 382L420 384L410 376Z"/><path d="M450 340L468 332L488 338L496 354L490 372L470 382L452 372L446 356Z"/><path d="M392 256L400 250L404 256L396 268L394 282L390 276Z"/></g><g filter="url(#hb0)" fill="none" stroke-linecap="round"><path d="M386 330C384 342 388 354 398 362C410 370 426 372 444 368C454 365 462 360 468 352" stroke="#123a90" stroke-width="1.200"/><path d="M428 366C440 364 452 358 466 350" stroke="#0c2c74" stroke-width="1.400"/><path d="M446 362C454 368 464 372 476 374" stroke="#0c2c74" stroke-width="1.200"/><path d="M404 312C410 309 418 309 424 313C430 318 430 326 424 330" stroke="#0a2466" stroke-width="1.300"/><path d="M392.500 284C389.500 275 391 263 399 255C404 251 410 250 416 251" stroke="#17489e" stroke-width="1.300"/><circle cx="405.500" cy="362.500" r="2.600" fill="#050a20" stroke="none"/><path d="M450.300 388v8" stroke="#f0402c" stroke-width="1.200"/><path d="M445 402l5-7 6 5-4 4z" fill="#f23a2c" stroke="none"/><rect x="433" y="309.500" width="5" height="3" fill="#f0452c" stroke="none"/><rect x="403" y="306" width="4" height="2.600" fill="#e8405a" stroke="none"/><rect x="413" y="305.500" width="2.600" height="3" fill="#e8405a" stroke="none"/><rect x="406.500" y="331" width="3" height="2.600" fill="#e8405a" stroke="none"/><path d="M468 296C476 298 486 300 494 298" stroke="#f0402c" stroke-width="2.400"/><path d="M482 270C487 278 489 288 489 300" stroke="#f0603a" stroke-width="2"/></g><rect x="461.100" y="280" width="17.200" height="16" fill="#020202"/></g><path d="M224.700 243v174.500H643" fill="none" stroke="#e8e8e8" stroke-width="0.800"/><path d="M223 407.4h1.700" stroke="#e8e8e8" stroke-width="0.700"/><path d="M223.700 400.5h1" stroke="#e8e8e8" stroke-width="0.600"/><text x="222.200" y="409.9" font-size="6.900" font-weight="bold" fill="#dedede" text-anchor="end">44</text><path d="M223 393.6h1.700" stroke="#e8e8e8" stroke-width="0.700"/><path d="M223.700 386.8h1" stroke="#e8e8e8" stroke-width="0.600"/><text x="222.200" y="396.1" font-size="6.900" font-weight="bold" fill="#dedede" text-anchor="end">45</text><path d="M223 379.8h1.700" stroke="#e8e8e8" stroke-width="0.700"/><path d="M223.700 373.0h1" stroke="#e8e8e8" stroke-width="0.600"/><text x="222.200" y="382.3" font-size="6.900" font-weight="bold" fill="#dedede" text-anchor="end">46</text><path d="M223 366.1h1.700" stroke="#e8e8e8" stroke-width="0.700"/><path d="M223.700 359.2h1" stroke="#e8e8e8" stroke-width="0.600"/><text x="222.200" y="368.6" font-size="6.900" font-weight="bold" fill="#dedede" text-anchor="end">47</text><path d="M223 352.3h1.700" stroke="#e8e8e8" stroke-width="0.700"/><path d="M223.700 345.4h1" stroke="#e8e8e8" stroke-width="0.600"/><text x="222.200" y="354.8" font-size="6.900" font-weight="bold" fill="#dedede" text-anchor="end">48</text><path d="M223 338.5h1.700" stroke="#e8e8e8" stroke-width="0.700"/><path d="M223.700 331.6h1" stroke="#e8e8e8" stroke-width="0.600"/><text x="222.200" y="341.0" font-size="6.900" font-weight="bold" fill="#dedede" text-anchor="end">49</text><path d="M223 324.7h1.700" stroke="#e8e8e8" stroke-width="0.700"/><path d="M223.700 317.9h1" stroke="#e8e8e8" stroke-width="0.600"/><text x="222.200" y="327.2" font-size="6.900" font-weight="bold" fill="#dedede" text-anchor="end">50</text><path d="M223 310.9h1.700" stroke="#e8e8e8" stroke-width="0.700"/><path d="M223.700 304.1h1" stroke="#e8e8e8" stroke-width="0.600"/><text x="222.200" y="313.4" font-size="6.900" font-weight="bold" fill="#dedede" text-anchor="end">51</text><path d="M223 297.2h1.700" stroke="#e8e8e8" stroke-width="0.700"/><path d="M223.700 290.3h1" stroke="#e8e8e8" stroke-width="0.600"/><text x="222.200" y="299.7" font-size="6.900" font-weight="bold" fill="#dedede" text-anchor="end">52</text><path d="M223 283.4h1.700" stroke="#e8e8e8" stroke-width="0.700"/><path d="M223.700 276.5h1" stroke="#e8e8e8" stroke-width="0.600"/><text x="222.200" y="285.9" font-size="6.900" font-weight="bold" fill="#dedede" text-anchor="end">53</text><path d="M223 269.6h1.700" stroke="#e8e8e8" stroke-width="0.700"/><path d="M223.700 262.8h1" stroke="#e8e8e8" stroke-width="0.600"/><text x="222.200" y="272.1" font-size="6.900" font-weight="bold" fill="#dedede" text-anchor="end">54</text><path d="M223 255.8h1.700" stroke="#e8e8e8" stroke-width="0.700"/><path d="M223.700 249.0h1" stroke="#e8e8e8" stroke-width="0.600"/><text x="222.200" y="258.3" font-size="6.900" font-weight="bold" fill="#dedede" text-anchor="end">55</text><path d="M231.1 417.500v2" stroke="#e8e8e8" stroke-width="0.700"/><path d="M238.0 417.500v1.200" stroke="#e8e8e8" stroke-width="0.600"/><text x="231.1" y="427.200" font-size="6.900" font-weight="bold" fill="#dedede" text-anchor="middle">6</text><path d="M244.8 417.500v2" stroke="#e8e8e8" stroke-width="0.700"/><path d="M251.7 417.500v1.200" stroke="#e8e8e8" stroke-width="0.600"/><text x="244.8" y="427.200" font-size="6.900" font-weight="bold" fill="#dedede" text-anchor="middle">7</text><path d="M258.6 417.500v2" stroke="#e8e8e8" stroke-width="0.700"/><path d="M265.4 417.500v1.200" stroke="#e8e8e8" stroke-width="0.600"/><text x="258.6" y="427.200" font-size="6.900" font-weight="bold" fill="#dedede" text-anchor="middle">8</text><path d="M272.3 417.500v2" stroke="#e8e8e8" stroke-width="0.700"/><path d="M279.2 417.500v1.200" stroke="#e8e8e8" stroke-width="0.600"/><text x="272.3" y="427.200" font-size="6.900" font-weight="bold" fill="#dedede" text-anchor="middle">9</text><path d="M286.0 417.500v2" stroke="#e8e8e8" stroke-width="0.700"/><path d="M292.9 417.500v1.200" stroke="#e8e8e8" stroke-width="0.600"/><text x="286.0" y="427.200" font-size="6.900" font-weight="bold" fill="#dedede" text-anchor="middle">10</text><path d="M299.8 417.500v2" stroke="#e8e8e8" stroke-width="0.700"/><path d="M306.6 417.500v1.200" stroke="#e8e8e8" stroke-width="0.600"/><text x="299.8" y="427.200" font-size="6.900" font-weight="bold" fill="#dedede" text-anchor="middle">11</text><path d="M313.5 417.500v2" stroke="#e8e8e8" stroke-width="0.700"/><path d="M320.4 417.500v1.200" stroke="#e8e8e8" stroke-width="0.600"/><text x="313.5" y="427.200" font-size="6.900" font-weight="bold" fill="#dedede" text-anchor="middle">12</text><path d="M327.2 417.500v2" stroke="#e8e8e8" stroke-width="0.700"/><path d="M334.1 417.500v1.200" stroke="#e8e8e8" stroke-width="0.600"/><text x="327.2" y="427.200" font-size="6.900" font-weight="bold" fill="#dedede" text-anchor="middle">13</text><path d="M340.9 417.500v2" stroke="#e8e8e8" stroke-width="0.700"/><path d="M347.8 417.500v1.200" stroke="#e8e8e8" stroke-width="0.600"/><text x="340.9" y="427.200" font-size="6.900" font-weight="bold" fill="#dedede" text-anchor="middle">14</text><path d="M354.7 417.500v2" stroke="#e8e8e8" stroke-width="0.700"/><path d="M361.5 417.500v1.200" stroke="#e8e8e8" stroke-width="0.600"/><text x="354.7" y="427.200" font-size="6.900" font-weight="bold" fill="#dedede" text-anchor="middle">15</text><path d="M368.4 417.500v2" stroke="#e8e8e8" stroke-width="0.700"/><path d="M375.3 417.500v1.200" stroke="#e8e8e8" stroke-width="0.600"/><text x="368.4" y="427.200" font-size="6.900" font-weight="bold" fill="#dedede" text-anchor="middle">16</text><path d="M382.1 417.500v2" stroke="#e8e8e8" stroke-width="0.700"/><path d="M389.0 417.500v1.200" stroke="#e8e8e8" stroke-width="0.600"/><text x="382.1" y="427.200" font-size="6.900" font-weight="bold" fill="#dedede" text-anchor="middle">17</text><path d="M395.9 417.500v2" stroke="#e8e8e8" stroke-width="0.700"/><path d="M402.7 417.500v1.200" stroke="#e8e8e8" stroke-width="0.600"/><text x="395.9" y="427.200" font-size="6.900" font-weight="bold" fill="#dedede" text-anchor="middle">18</text><path d="M409.6 417.500v2" stroke="#e8e8e8" stroke-width="0.700"/><path d="M416.5 417.500v1.200" stroke="#e8e8e8" stroke-width="0.600"/><text x="409.6" y="427.200" font-size="6.900" font-weight="bold" fill="#dedede" text-anchor="middle">19</text><path d="M423.3 417.500v2" stroke="#e8e8e8" stroke-width="0.700"/><path d="M430.2 417.500v1.200" stroke="#e8e8e8" stroke-width="0.600"/><text x="423.3" y="427.200" font-size="6.900" font-weight="bold" fill="#dedede" text-anchor="middle">20</text><path d="M437.1 417.500v2" stroke="#e8e8e8" stroke-width="0.700"/><path d="M443.9 417.500v1.200" stroke="#e8e8e8" stroke-width="0.600"/><text x="437.1" y="427.200" font-size="6.900" font-weight="bold" fill="#dedede" text-anchor="middle">21</text><path d="M450.8 417.500v2" stroke="#e8e8e8" stroke-width="0.700"/><path d="M457.6 417.500v1.200" stroke="#e8e8e8" stroke-width="0.600"/><text x="450.8" y="427.200" font-size="6.900" font-weight="bold" fill="#dedede" text-anchor="middle">22</text><path d="M464.5 417.500v2" stroke="#e8e8e8" stroke-width="0.700"/><path d="M471.4 417.500v1.200" stroke="#e8e8e8" stroke-width="0.600"/><text x="464.5" y="427.200" font-size="6.900" font-weight="bold" fill="#dedede" text-anchor="middle">23</text><path d="M478.2 417.500v2" stroke="#e8e8e8" stroke-width="0.700"/><path d="M485.1 417.500v1.200" stroke="#e8e8e8" stroke-width="0.600"/><text x="478.2" y="427.200" font-size="6.900" font-weight="bold" fill="#dedede" text-anchor="middle">24</text><path d="M492.0 417.500v2" stroke="#e8e8e8" stroke-width="0.700"/><path d="M498.8 417.500v1.200" stroke="#e8e8e8" stroke-width="0.600"/><text x="492.0" y="427.200" font-size="6.900" font-weight="bold" fill="#dedede" text-anchor="middle">25</text><path d="M505.7 417.500v2" stroke="#e8e8e8" stroke-width="0.700"/><path d="M512.6 417.500v1.200" stroke="#e8e8e8" stroke-width="0.600"/><text x="505.7" y="427.200" font-size="6.900" font-weight="bold" fill="#dedede" text-anchor="middle">26</text><path d="M519.4 417.500v2" stroke="#e8e8e8" stroke-width="0.700"/><path d="M526.3 417.500v1.200" stroke="#e8e8e8" stroke-width="0.600"/><text x="519.4" y="427.200" font-size="6.900" font-weight="bold" fill="#dedede" text-anchor="middle">27</text><path d="M533.2 417.500v2" stroke="#e8e8e8" stroke-width="0.700"/><path d="M540.0 417.500v1.200" stroke="#e8e8e8" stroke-width="0.600"/><text x="533.2" y="427.200" font-size="6.900" font-weight="bold" fill="#dedede" text-anchor="middle">28</text><path d="M546.9 417.500v2" stroke="#e8e8e8" stroke-width="0.700"/><path d="M553.8 417.500v1.200" stroke="#e8e8e8" stroke-width="0.600"/><text x="546.9" y="427.200" font-size="6.900" font-weight="bold" fill="#dedede" text-anchor="middle">29</text><path d="M560.6 417.500v2" stroke="#e8e8e8" stroke-width="0.700"/><path d="M567.5 417.500v1.200" stroke="#e8e8e8" stroke-width="0.600"/><text x="560.6" y="427.200" font-size="6.900" font-weight="bold" fill="#dedede" text-anchor="middle">30</text><path d="M574.4 417.500v2" stroke="#e8e8e8" stroke-width="0.700"/><path d="M581.2 417.500v1.200" stroke="#e8e8e8" stroke-width="0.600"/><text x="574.4" y="427.200" font-size="6.900" font-weight="bold" fill="#dedede" text-anchor="middle">31</text><path d="M588.1 417.500v2" stroke="#e8e8e8" stroke-width="0.700"/><path d="M595.0 417.500v1.200" stroke="#e8e8e8" stroke-width="0.600"/><text x="588.1" y="427.200" font-size="6.900" font-weight="bold" fill="#dedede" text-anchor="middle">32</text><path d="M601.8 417.500v2" stroke="#e8e8e8" stroke-width="0.700"/><path d="M608.7 417.500v1.200" stroke="#e8e8e8" stroke-width="0.600"/><text x="601.8" y="427.200" font-size="6.900" font-weight="bold" fill="#dedede" text-anchor="middle">33</text><path d="M615.5 417.500v2" stroke="#e8e8e8" stroke-width="0.700"/><path d="M622.4 417.500v1.200" stroke="#e8e8e8" stroke-width="0.600"/><text x="615.5" y="427.200" font-size="6.900" font-weight="bold" fill="#dedede" text-anchor="middle">34</text><path d="M629.3 417.500v2" stroke="#e8e8e8" stroke-width="0.700"/><path d="M636.1 417.500v1.200" stroke="#e8e8e8" stroke-width="0.600"/><text x="629.3" y="427.200" font-size="6.900" font-weight="bold" fill="#dedede" text-anchor="middle">35</text><text x="434.200" y="436.200" font-size="7.800" font-weight="bold" fill="#fff" text-anchor="middle" textLength="39" lengthAdjust="spacingAndGlyphs">X Position</text><text transform="translate(211.200 332) rotate(-90)" font-size="7.800" font-weight="bold" fill="#fff" text-anchor="middle" textLength="39" lengthAdjust="spacingAndGlyphs">Y Position</text><path d="M311 229.800h9.500" stroke="#3f9f86" stroke-width="0.900"/><text x="323.300" y="232" font-size="6.400" fill="#c4c4c4" textLength="215.700" lengthAdjust="spacingAndGlyphs">200 - 900 - 26358.566 mean 28419.917 s.d. 100% hits 282159.421 max</text><rect x="631" y="422" width="17" height="16.600" fill="#8c8c8c"/><rect x="632.500" y="434.600" width="14" height="1.600" fill="#6a6a6a"/><path d="M633.500 431l2.500-3 2 2 2.600-4 2.400 3 2.400-2" fill="none" stroke="#c0304a" stroke-width="0.900"/></svg>
</body></html>
